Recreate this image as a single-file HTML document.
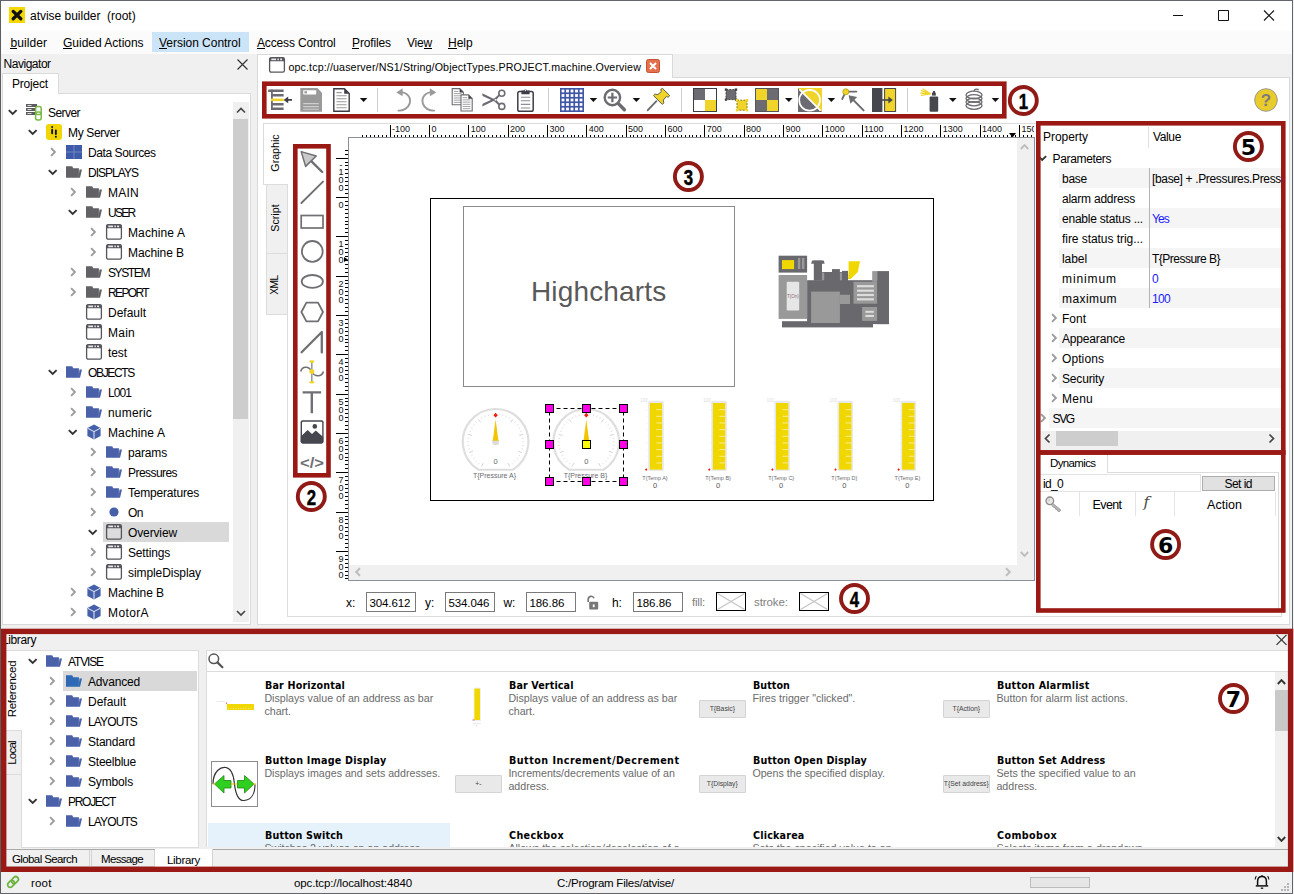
<!DOCTYPE html>
<html><head><meta charset="utf-8"><title>atvise builder</title>
<style>
html,body{margin:0;padding:0}
body{width:1294px;height:894px;position:relative;overflow:hidden;background:#f0f0f0;font-family:"Liberation Sans",sans-serif;font-size:12px;color:#000}
.a{position:absolute;box-sizing:border-box}
.t{white-space:pre}
svg{overflow:visible}

</style></head>
<body>
<div class="a" style="left:0px;top:0px;width:1292px;height:31px;background:#fff"></div>
<svg class="a" style="left:9px;top:7px;" width="16" height="16" viewBox="0 0 16 16"><rect width="16" height="16" fill="#f5d800"/><path d="M4.200 4.400L11.800 11.800M11.800 4.400L4.200 11.800" stroke="#111" stroke-width="3.300" stroke-linecap="round"/></svg>
<div class="a t" style="left:30px;top:5.84px;line-height:20px;font-family:'Liberation Sans',sans-serif;font-size:12px;letter-spacing:-0.020px;">atvise builder  (root)</div>
<svg class="a" style="left:1168px;top:0px;" width="126" height="31" viewBox="0 0 126 31"><path d="M5 15.5h10" stroke="#111" stroke-width="1"/><path d="M50.5 10.5h10v10h-10z" fill="none" stroke="#111" stroke-width="1"/><path d="M96 10.5l10 10M106 10.5l-10 10" stroke="#111" stroke-width="1.1"/></svg>
<div class="a" style="left:1px;top:31px;width:1291px;height:23px;background:#fbfbfb"></div>
<div class="a" style="left:152px;top:32px;width:96.5px;height:20px;background:#cce4f7"></div>
<div class="a t" style="left:10.4px;top:32.84px;line-height:20px;font-family:'Liberation Sans',sans-serif;font-size:12px;letter-spacing:0.081px;">builder</div>
<div class="a" style="left:10.4px;top:48px;width:7px;height:1px;background:#000"></div>
<div class="a t" style="left:63px;top:32.84px;line-height:20px;font-family:'Liberation Sans',sans-serif;font-size:12px;letter-spacing:-0.008px;">Guided Actions</div>
<div class="a" style="left:63px;top:48px;width:8.5px;height:1px;background:#000"></div>
<div class="a t" style="left:159px;top:32.84px;line-height:20px;font-family:'Liberation Sans',sans-serif;font-size:12px;letter-spacing:-0.030px;">Version Control</div>
<div class="a" style="left:159px;top:48px;width:7.5px;height:1px;background:#000"></div>
<div class="a t" style="left:257px;top:32.84px;line-height:20px;font-family:'Liberation Sans',sans-serif;font-size:12px;letter-spacing:-0.150px;">Access Control</div>
<div class="a" style="left:257px;top:48px;width:8px;height:1px;background:#000"></div>
<div class="a t" style="left:352px;top:32.84px;line-height:20px;font-family:'Liberation Sans',sans-serif;font-size:12px;letter-spacing:-0.127px;">Profiles</div>
<div class="a" style="left:352px;top:48px;width:7px;height:1px;background:#000"></div>
<div class="a t" style="left:407px;top:32.84px;line-height:20px;font-family:'Liberation Sans',sans-serif;font-size:12px;letter-spacing:-0.199px;">View</div>
<div class="a" style="left:423.5px;top:48px;width:8.5px;height:1px;background:#000"></div>
<div class="a t" style="left:448px;top:32.84px;line-height:20px;font-family:'Liberation Sans',sans-serif;font-size:12px;letter-spacing:-0.022px;">Help</div>
<div class="a" style="left:448px;top:48px;width:8.5px;height:1px;background:#000"></div>
<div class="a t" style="left:3.6px;top:54.44px;line-height:20px;font-family:'Liberation Sans',sans-serif;font-size:12px;letter-spacing:-0.484px;">Navigator</div>
<svg class="a" style="left:237px;top:59px;" width="11" height="11" viewBox="0 0 11 11"><path d="M0.5 0.5l10 10M10.5 0.5l-10 10" stroke="#333" stroke-width="1.2"/></svg>
<div class="a" style="left:2px;top:93px;width:248.5px;height:532px;background:#fff;border:1px solid #dadada"></div>
<div class="a" style="left:2px;top:73px;width:56.5px;height:21px;background:#fff;border:1px solid #dadada;border-bottom:none"></div>
<div class="a t" style="left:12px;top:74.24px;line-height:20px;font-family:'Liberation Sans',sans-serif;font-size:12px;letter-spacing:-0.194px;">Project</div>
<div class="a" style="left:233px;top:102px;width:16px;height:520px;background:#f0f0f0"></div>
<div class="a" style="left:233px;top:119px;width:15px;height:300px;background:#cdcdcd"></div>
<svg class="a" style="left:236px;top:107px;" width="10" height="7" viewBox="0 0 10 7"><path d="M1 5.5l4-4 4 4" fill="none" stroke="#444" stroke-width="1.6"/></svg>
<svg class="a" style="left:236px;top:610px;" width="10" height="7" viewBox="0 0 10 7"><path d="M1 1l4 4 4-4" fill="none" stroke="#444" stroke-width="1.6"/></svg>
<svg class="a" style="left:8px;top:109px;" width="10" height="7" viewBox="0 0 10 7"><path d="M0.800 1.100l3.900 3.900L8.600 1.100" fill="none" stroke="#333" stroke-width="1.900"/></svg>
<svg class="a" style="left:26px;top:103px;" width="17" height="18" viewBox="0 0 17 18"><g fill="#5c5c60"><rect x="0" y="1" width="11" height="3"/><rect x="0" y="5" width="11" height="3"/><rect x="0" y="9" width="9" height="3"/></g><g fill="#ddd"><rect x="1.5" y="2" width="4" height="1"/><rect x="1.5" y="6" width="4" height="1"/><rect x="1.5" y="10" width="4" height="1"/></g><rect x="9.6" y="3.6" width="5.6" height="8" rx="2" fill="#fff" stroke="#78b843" stroke-width="1.5"/><rect x="9.6" y="9" width="5.6" height="8" rx="2" fill="none" stroke="#78b843" stroke-width="1.5"/></svg>
<div class="a t" style="left:48px;top:103.04px;line-height:20px;font-family:'Liberation Sans',sans-serif;font-size:12px;letter-spacing:-0.557px;">Server</div>
<svg class="a" style="left:28px;top:129px;" width="10" height="7" viewBox="0 0 10 7"><path d="M0.800 1.100l3.900 3.900L8.600 1.100" fill="none" stroke="#333" stroke-width="1.900"/></svg>
<svg class="a" style="left:46px;top:124px;" width="16" height="16" viewBox="0 0 16 16"><rect width="16" height="16" rx="3" fill="#f2d600"/><g fill="#111"><rect x="5.2" y="4.8" width="1.9" height="5.4" rx="0.9"/><circle cx="6.15" cy="3" r="1"/><rect x="8.9" y="5.6" width="1.9" height="5.4" rx="0.9"/><circle cx="9.85" cy="12.8" r="1"/></g></svg>
<div class="a t" style="left:68px;top:123.04px;line-height:20px;font-family:'Liberation Sans',sans-serif;font-size:12px;letter-spacing:-0.343px;">My Server</div>
<svg class="a" style="left:50px;top:147px;" width="7" height="10" viewBox="0 0 7 10"><path d="M1.100 1.200l3.800 3.800L1.100 8.800" fill="none" stroke="#9c9c9c" stroke-width="1.900"/></svg>
<svg class="a" style="left:66px;top:145px;" width="16" height="14" viewBox="0 0 16 14"><rect width="16" height="14" fill="#3f5ba9"/><path d="M8 0v14M0 7h16" stroke="#6e84c4" stroke-width="1"/></svg>
<div class="a t" style="left:88px;top:143.04px;line-height:20px;font-family:'Liberation Sans',sans-serif;font-size:12px;letter-spacing:-0.425px;">Data Sources</div>
<svg class="a" style="left:48px;top:169px;" width="10" height="7" viewBox="0 0 10 7"><path d="M0.800 1.100l3.900 3.900L8.600 1.100" fill="none" stroke="#333" stroke-width="1.900"/></svg>
<svg class="a" style="left:66px;top:166px;" width="16" height="12" viewBox="0 0 16 12"><path d="M0 0.300h6.200l1 1.900h5.700v9.600H0z" fill="#616166"/><path d="M13.500 3.600h2.500l-2 8.200h-1.400l0.300-3z" fill="#616166"/></svg>
<div class="a t" style="left:88px;top:163.04px;line-height:20px;font-family:'Liberation Sans',sans-serif;font-size:12px;letter-spacing:-0.977px;">DISPLAYS</div>
<svg class="a" style="left:70px;top:187px;" width="7" height="10" viewBox="0 0 7 10"><path d="M1.100 1.200l3.800 3.800L1.100 8.800" fill="none" stroke="#9c9c9c" stroke-width="1.900"/></svg>
<svg class="a" style="left:86px;top:186px;" width="16" height="12" viewBox="0 0 16 12"><path d="M0 0.300h6.200l1 1.900h5.700v9.600H0z" fill="#616166"/><path d="M13.500 3.600h2.500l-2 8.200h-1.400l0.300-3z" fill="#616166"/></svg>
<div class="a t" style="left:108px;top:183.04px;line-height:20px;font-family:'Liberation Sans',sans-serif;font-size:12px;letter-spacing:0.250px;">MAIN</div>
<svg class="a" style="left:68px;top:209px;" width="10" height="7" viewBox="0 0 10 7"><path d="M0.800 1.100l3.900 3.900L8.600 1.100" fill="none" stroke="#333" stroke-width="1.900"/></svg>
<svg class="a" style="left:86px;top:206px;" width="16" height="12" viewBox="0 0 16 12"><path d="M0 0.300h6.200l1 1.900h5.700v9.600H0z" fill="#616166"/><path d="M13.500 3.600h2.500l-2 8.200h-1.400l0.300-3z" fill="#616166"/></svg>
<div class="a t" style="left:108px;top:203.04px;line-height:20px;font-family:'Liberation Sans',sans-serif;font-size:12px;letter-spacing:-1.711px;">USER</div>
<svg class="a" style="left:90px;top:227px;" width="7" height="10" viewBox="0 0 7 10"><path d="M1.100 1.200l3.800 3.800L1.100 8.800" fill="none" stroke="#9c9c9c" stroke-width="1.900"/></svg>
<svg class="a" style="left:106px;top:224px;" width="16" height="16" viewBox="0 0 16 16"><rect x="0.600" y="0.600" width="14.800" height="14.600" rx="1.600" fill="#fff" stroke="#55555c" stroke-width="1.300"/><path d="M0.600 4.200V2.200a1.600 1.600 0 0 1 1.600-1.600h11.600a1.600 1.600 0 0 1 1.600 1.600v2z" fill="#55555c"/><g fill="#e6e6e6"><rect x="2.300" y="1.500" width="4.800" height="1.700"/><rect x="8.400" y="1.500" width="1.500" height="1.700"/><rect x="11.100" y="1.500" width="2" height="1.700"/></g></svg>
<div class="a t" style="left:128px;top:223.04px;line-height:20px;font-family:'Liberation Sans',sans-serif;font-size:12px;letter-spacing:0.106px;">Machine A</div>
<svg class="a" style="left:90px;top:247px;" width="7" height="10" viewBox="0 0 7 10"><path d="M1.100 1.200l3.800 3.800L1.100 8.800" fill="none" stroke="#9c9c9c" stroke-width="1.900"/></svg>
<svg class="a" style="left:106px;top:244px;" width="16" height="16" viewBox="0 0 16 16"><rect x="0.600" y="0.600" width="14.800" height="14.600" rx="1.600" fill="#fff" stroke="#55555c" stroke-width="1.300"/><path d="M0.600 4.200V2.200a1.600 1.600 0 0 1 1.600-1.600h11.600a1.600 1.600 0 0 1 1.600 1.600v2z" fill="#55555c"/><g fill="#e6e6e6"><rect x="2.300" y="1.500" width="4.800" height="1.700"/><rect x="8.400" y="1.500" width="1.500" height="1.700"/><rect x="11.100" y="1.500" width="2" height="1.700"/></g></svg>
<div class="a t" style="left:128px;top:243.04px;line-height:20px;font-family:'Liberation Sans',sans-serif;font-size:12px;letter-spacing:-0.078px;">Machine B</div>
<svg class="a" style="left:70px;top:267px;" width="7" height="10" viewBox="0 0 7 10"><path d="M1.100 1.200l3.800 3.800L1.100 8.800" fill="none" stroke="#9c9c9c" stroke-width="1.900"/></svg>
<svg class="a" style="left:86px;top:266px;" width="16" height="12" viewBox="0 0 16 12"><path d="M0 0.300h6.200l1 1.900h5.700v9.600H0z" fill="#616166"/><path d="M13.500 3.600h2.500l-2 8.200h-1.400l0.300-3z" fill="#616166"/></svg>
<div class="a t" style="left:108px;top:263.04px;line-height:20px;font-family:'Liberation Sans',sans-serif;font-size:12px;letter-spacing:-1.391px;">SYSTEM</div>
<svg class="a" style="left:70px;top:287px;" width="7" height="10" viewBox="0 0 7 10"><path d="M1.100 1.200l3.800 3.800L1.100 8.800" fill="none" stroke="#9c9c9c" stroke-width="1.900"/></svg>
<svg class="a" style="left:86px;top:286px;" width="16" height="12" viewBox="0 0 16 12"><path d="M0 0.300h6.200l1 1.900h5.700v9.600H0z" fill="#616166"/><path d="M13.500 3.600h2.500l-2 8.200h-1.400l0.300-3z" fill="#616166"/></svg>
<div class="a t" style="left:108px;top:283.04px;line-height:20px;font-family:'Liberation Sans',sans-serif;font-size:12px;letter-spacing:-1.633px;">REPORT</div>
<svg class="a" style="left:86px;top:304px;" width="16" height="16" viewBox="0 0 16 16"><rect x="0.600" y="0.600" width="14.800" height="14.600" rx="1.600" fill="#fff" stroke="#55555c" stroke-width="1.300"/><path d="M0.600 4.200V2.200a1.600 1.600 0 0 1 1.600-1.600h11.600a1.600 1.600 0 0 1 1.600 1.600v2z" fill="#55555c"/><g fill="#e6e6e6"><rect x="2.300" y="1.500" width="4.800" height="1.700"/><rect x="8.400" y="1.500" width="1.500" height="1.700"/><rect x="11.100" y="1.500" width="2" height="1.700"/></g></svg>
<div class="a t" style="left:108px;top:303.04px;line-height:20px;font-family:'Liberation Sans',sans-serif;font-size:12px;letter-spacing:-0.004px;">Default</div>
<svg class="a" style="left:86px;top:324px;" width="16" height="16" viewBox="0 0 16 16"><rect x="0.600" y="0.600" width="14.800" height="14.600" rx="1.600" fill="#fff" stroke="#55555c" stroke-width="1.300"/><path d="M0.600 4.200V2.200a1.600 1.600 0 0 1 1.600-1.600h11.600a1.600 1.600 0 0 1 1.600 1.600v2z" fill="#55555c"/><g fill="#e6e6e6"><rect x="2.300" y="1.500" width="4.800" height="1.700"/><rect x="8.400" y="1.500" width="1.500" height="1.700"/><rect x="11.100" y="1.500" width="2" height="1.700"/></g></svg>
<div class="a t" style="left:108px;top:323.04px;line-height:20px;font-family:'Liberation Sans',sans-serif;font-size:12px;letter-spacing:0.246px;">Main</div>
<svg class="a" style="left:86px;top:344px;" width="16" height="16" viewBox="0 0 16 16"><rect x="0.600" y="0.600" width="14.800" height="14.600" rx="1.600" fill="#fff" stroke="#55555c" stroke-width="1.300"/><path d="M0.600 4.200V2.200a1.600 1.600 0 0 1 1.600-1.600h11.600a1.600 1.600 0 0 1 1.600 1.600v2z" fill="#55555c"/><g fill="#e6e6e6"><rect x="2.300" y="1.500" width="4.800" height="1.700"/><rect x="8.400" y="1.500" width="1.500" height="1.700"/><rect x="11.100" y="1.500" width="2" height="1.700"/></g></svg>
<div class="a t" style="left:108px;top:343.04px;line-height:20px;font-family:'Liberation Sans',sans-serif;font-size:12px;letter-spacing:-0.086px;">test</div>
<svg class="a" style="left:48px;top:369px;" width="10" height="7" viewBox="0 0 10 7"><path d="M0.800 1.100l3.900 3.900L8.600 1.100" fill="none" stroke="#333" stroke-width="1.900"/></svg>
<svg class="a" style="left:66px;top:366px;" width="16" height="12" viewBox="0 0 16 12"><path d="M0 0.300h6.200l1 1.900h5.700v9.600H0z" fill="#4a60a8"/><path d="M13.500 3.600h2.500l-2 8.200h-1.400l0.300-3z" fill="#4a60a8"/></svg>
<div class="a t" style="left:88px;top:363.04px;line-height:20px;font-family:'Liberation Sans',sans-serif;font-size:12px;letter-spacing:-1.335px;">OBJECTS</div>
<svg class="a" style="left:70px;top:387px;" width="7" height="10" viewBox="0 0 7 10"><path d="M1.100 1.200l3.800 3.800L1.100 8.800" fill="none" stroke="#9c9c9c" stroke-width="1.900"/></svg>
<svg class="a" style="left:86px;top:386px;" width="16" height="12" viewBox="0 0 16 12"><path d="M0 0.300h6.200l1 1.900h5.700v9.600H0z" fill="#4a60a8"/><path d="M13.500 3.600h2.500l-2 8.200h-1.400l0.300-3z" fill="#4a60a8"/></svg>
<div class="a t" style="left:108px;top:383.04px;line-height:20px;font-family:'Liberation Sans',sans-serif;font-size:12px;letter-spacing:-0.926px;">L001</div>
<svg class="a" style="left:70px;top:407px;" width="7" height="10" viewBox="0 0 7 10"><path d="M1.100 1.200l3.800 3.800L1.100 8.800" fill="none" stroke="#9c9c9c" stroke-width="1.900"/></svg>
<svg class="a" style="left:86px;top:406px;" width="16" height="12" viewBox="0 0 16 12"><path d="M0 0.300h6.200l1 1.900h5.700v9.600H0z" fill="#4a60a8"/><path d="M13.500 3.600h2.500l-2 8.200h-1.400l0.300-3z" fill="#4a60a8"/></svg>
<div class="a t" style="left:108px;top:403.04px;line-height:20px;font-family:'Liberation Sans',sans-serif;font-size:12px;letter-spacing:0.188px;">numeric</div>
<svg class="a" style="left:68px;top:429px;" width="10" height="7" viewBox="0 0 10 7"><path d="M0.800 1.100l3.900 3.900L8.600 1.100" fill="none" stroke="#333" stroke-width="1.900"/></svg>
<svg class="a" style="left:86px;top:424px;" width="16" height="16" viewBox="0 0 16 16"><path d="M8 0.6l6.6 3.5v7.8L8 15.4 1.4 11.9V4.1z" fill="#4560a8"/><path d="M1.8 4.3L8 7.6l6.2-3.3M8 7.6v7.4" fill="none" stroke="#e8ecf6" stroke-width="1"/></svg>
<div class="a t" style="left:108px;top:423.04px;line-height:20px;font-family:'Liberation Sans',sans-serif;font-size:12px;letter-spacing:0.106px;">Machine A</div>
<svg class="a" style="left:90px;top:447px;" width="7" height="10" viewBox="0 0 7 10"><path d="M1.100 1.200l3.800 3.800L1.100 8.800" fill="none" stroke="#9c9c9c" stroke-width="1.900"/></svg>
<svg class="a" style="left:106px;top:446px;" width="16" height="12" viewBox="0 0 16 12"><path d="M0 0.300h6.200l1 1.900h5.700v9.600H0z" fill="#4a60a8"/><path d="M13.500 3.600h2.500l-2 8.200h-1.400l0.300-3z" fill="#4a60a8"/></svg>
<div class="a t" style="left:128px;top:443.04px;line-height:20px;font-family:'Liberation Sans',sans-serif;font-size:12px;letter-spacing:-0.169px;">params</div>
<svg class="a" style="left:90px;top:467px;" width="7" height="10" viewBox="0 0 7 10"><path d="M1.100 1.200l3.800 3.800L1.100 8.800" fill="none" stroke="#9c9c9c" stroke-width="1.900"/></svg>
<svg class="a" style="left:106px;top:466px;" width="16" height="12" viewBox="0 0 16 12"><path d="M0 0.300h6.200l1 1.900h5.700v9.600H0z" fill="#4a60a8"/><path d="M13.500 3.600h2.500l-2 8.200h-1.400l0.300-3z" fill="#4a60a8"/></svg>
<div class="a t" style="left:128px;top:463.04px;line-height:20px;font-family:'Liberation Sans',sans-serif;font-size:12px;letter-spacing:-0.559px;">Pressures</div>
<svg class="a" style="left:90px;top:487px;" width="7" height="10" viewBox="0 0 7 10"><path d="M1.100 1.200l3.800 3.800L1.100 8.800" fill="none" stroke="#9c9c9c" stroke-width="1.900"/></svg>
<svg class="a" style="left:106px;top:486px;" width="16" height="12" viewBox="0 0 16 12"><path d="M0 0.300h6.200l1 1.900h5.700v9.600H0z" fill="#4a60a8"/><path d="M13.500 3.600h2.500l-2 8.200h-1.400l0.300-3z" fill="#4a60a8"/></svg>
<div class="a t" style="left:128px;top:483.04px;line-height:20px;font-family:'Liberation Sans',sans-serif;font-size:12px;letter-spacing:-0.198px;">Temperatures</div>
<svg class="a" style="left:90px;top:507px;" width="7" height="10" viewBox="0 0 7 10"><path d="M1.100 1.200l3.800 3.800L1.100 8.800" fill="none" stroke="#9c9c9c" stroke-width="1.900"/></svg>
<svg class="a" style="left:106px;top:504px;" width="16" height="16" viewBox="0 0 16 16"><circle cx="8" cy="8" r="4.6" fill="#4560a8"/></svg>
<div class="a t" style="left:128px;top:503.04px;line-height:20px;font-family:'Liberation Sans',sans-serif;font-size:12px;letter-spacing:-0.508px;">On</div>
<div class="a" style="left:103px;top:522px;width:126px;height:20px;background:#d9d9d9"></div>
<svg class="a" style="left:88px;top:529px;" width="10" height="7" viewBox="0 0 10 7"><path d="M0.800 1.100l3.900 3.900L8.600 1.100" fill="none" stroke="#333" stroke-width="1.900"/></svg>
<svg class="a" style="left:106px;top:524px;" width="16" height="16" viewBox="0 0 16 16"><rect x="0.600" y="0.600" width="14.800" height="14.600" rx="1.600" fill="#dcdcdc" stroke="#55555c" stroke-width="1.300"/><path d="M0.600 4.200V2.200a1.600 1.600 0 0 1 1.600-1.600h11.600a1.600 1.600 0 0 1 1.600 1.600v2z" fill="#55555c"/><g fill="#e6e6e6"><rect x="2.300" y="1.500" width="4.800" height="1.700"/><rect x="8.400" y="1.500" width="1.500" height="1.700"/><rect x="11.100" y="1.500" width="2" height="1.700"/></g></svg>
<div class="a t" style="left:128px;top:523.04px;line-height:20px;font-family:'Liberation Sans',sans-serif;font-size:12px;letter-spacing:-0.127px;">Overview</div>
<svg class="a" style="left:90px;top:547px;" width="7" height="10" viewBox="0 0 7 10"><path d="M1.100 1.200l3.800 3.800L1.100 8.800" fill="none" stroke="#9c9c9c" stroke-width="1.900"/></svg>
<svg class="a" style="left:106px;top:544px;" width="16" height="16" viewBox="0 0 16 16"><rect x="0.600" y="0.600" width="14.800" height="14.600" rx="1.600" fill="#fff" stroke="#55555c" stroke-width="1.300"/><path d="M0.600 4.200V2.200a1.600 1.600 0 0 1 1.600-1.600h11.600a1.600 1.600 0 0 1 1.600 1.600v2z" fill="#55555c"/><g fill="#e6e6e6"><rect x="2.300" y="1.500" width="4.800" height="1.700"/><rect x="8.400" y="1.500" width="1.500" height="1.700"/><rect x="11.100" y="1.500" width="2" height="1.700"/></g></svg>
<div class="a t" style="left:128px;top:543.04px;line-height:20px;font-family:'Liberation Sans',sans-serif;font-size:12px;letter-spacing:-0.170px;">Settings</div>
<svg class="a" style="left:90px;top:567px;" width="7" height="10" viewBox="0 0 7 10"><path d="M1.100 1.200l3.800 3.800L1.100 8.800" fill="none" stroke="#9c9c9c" stroke-width="1.900"/></svg>
<svg class="a" style="left:106px;top:564px;" width="16" height="16" viewBox="0 0 16 16"><rect x="0.600" y="0.600" width="14.800" height="14.600" rx="1.600" fill="#fff" stroke="#55555c" stroke-width="1.300"/><path d="M0.600 4.200V2.200a1.600 1.600 0 0 1 1.600-1.600h11.600a1.600 1.600 0 0 1 1.600 1.600v2z" fill="#55555c"/><g fill="#e6e6e6"><rect x="2.300" y="1.500" width="4.800" height="1.700"/><rect x="8.400" y="1.500" width="1.500" height="1.700"/><rect x="11.100" y="1.500" width="2" height="1.700"/></g></svg>
<div class="a t" style="left:128px;top:563.04px;line-height:20px;font-family:'Liberation Sans',sans-serif;font-size:12px;letter-spacing:-0.079px;">simpleDisplay</div>
<svg class="a" style="left:70px;top:587px;" width="7" height="10" viewBox="0 0 7 10"><path d="M1.100 1.200l3.800 3.800L1.100 8.800" fill="none" stroke="#9c9c9c" stroke-width="1.900"/></svg>
<svg class="a" style="left:86px;top:584px;" width="16" height="16" viewBox="0 0 16 16"><path d="M8 0.6l6.6 3.5v7.8L8 15.4 1.4 11.9V4.1z" fill="#4560a8"/><path d="M1.8 4.3L8 7.6l6.2-3.3M8 7.6v7.4" fill="none" stroke="#e8ecf6" stroke-width="1"/></svg>
<div class="a t" style="left:108px;top:583.04px;line-height:20px;font-family:'Liberation Sans',sans-serif;font-size:12px;letter-spacing:-0.078px;">Machine B</div>
<svg class="a" style="left:70px;top:607px;" width="7" height="10" viewBox="0 0 7 10"><path d="M1.100 1.200l3.800 3.800L1.100 8.800" fill="none" stroke="#9c9c9c" stroke-width="1.900"/></svg>
<svg class="a" style="left:86px;top:604px;" width="16" height="16" viewBox="0 0 16 16"><path d="M8 0.6l6.6 3.5v7.8L8 15.4 1.4 11.9V4.1z" fill="#4560a8"/><path d="M1.8 4.3L8 7.6l6.2-3.3M8 7.6v7.4" fill="none" stroke="#e8ecf6" stroke-width="1"/></svg>
<div class="a t" style="left:108px;top:603.04px;line-height:20px;font-family:'Liberation Sans',sans-serif;font-size:12px;letter-spacing:0.385px;">MotorA</div>
<div class="a" style="left:257px;top:54px;width:1032.5px;height:24px;background:#f0f0f0;border-bottom:1px solid #d9d9d9"></div>
<div class="a" style="left:257px;top:77.5px;width:1032.5px;height:547px;background:#fff;border:1px solid #d9d9d9;border-top:none"></div>
<div class="a" style="left:257px;top:54px;width:416px;height:24px;background:#fff;border:1px solid #d9d9d9;border-bottom:none"></div>
<svg class="a" style="left:269px;top:57px;" width="16" height="16" viewBox="0 0 16 16"><rect x="0.600" y="0.600" width="14.800" height="14.600" rx="1.600" fill="#fff" stroke="#55555c" stroke-width="1.300"/><path d="M0.600 4.200V2.200a1.600 1.600 0 0 1 1.600-1.600h11.600a1.600 1.600 0 0 1 1.600 1.600v2z" fill="#55555c"/><g fill="#e6e6e6"><rect x="2.300" y="1.500" width="4.800" height="1.700"/><rect x="8.400" y="1.500" width="1.500" height="1.700"/><rect x="11.100" y="1.500" width="2" height="1.700"/></g></svg>
<div class="a t" style="left:288.4px;top:57.10px;line-height:20px;font-family:'Liberation Sans',sans-serif;font-size:10.67px;letter-spacing:0.138px;">opc.tcp://uaserver/NS1/String/ObjectTypes.PROJECT.machine.Overview</div>
<svg class="a" style="left:646px;top:59px;" width="14" height="14" viewBox="0 0 14 14"><rect x="0.5" y="0.5" width="13" height="13" rx="2" fill="#e2714f" stroke="#c9502e"/><path d="M4 4l6 6M10 4l-6 6" stroke="#fff" stroke-width="2"/></svg>
<div class="a" style="left:286.5px;top:123px;width:995px;height:493.5px;background:#fff;border:1px solid #dcdcdc"></div>
<div class="a" style="left:266px;top:184px;width:21px;height:69.5px;background:#f0f0f0;border:1px solid #dcdcdc;border-right:none"></div>
<div class="a" style="left:266px;top:253px;width:21px;height:62px;background:#f0f0f0;border:1px solid #dcdcdc;border-right:none"></div>
<div class="a" style="left:263px;top:123px;width:24.5px;height:61.5px;background:#fff;border:1px solid #dcdcdc;border-right:none"></div>
<div class="a t" style="left:275.3px;top:153px;width:0;height:0;"><div class="a t" style="left:-20.0px;top:-10px;width:40px;line-height:20px;text-align:center;font-family:'Liberation Sans',sans-serif;font-size:10.67px;transform:rotate(-90deg);transform-origin:50% 50%;">Graphic</div></div>
<div class="a t" style="left:275.3px;top:218px;width:0;height:0;"><div class="a t" style="left:-15.0px;top:-10px;width:30px;line-height:20px;text-align:center;font-family:'Liberation Sans',sans-serif;font-size:10.67px;transform:rotate(-90deg);transform-origin:50% 50%;">Script</div></div>
<div class="a t" style="left:275.3px;top:285px;width:0;height:0;"><div class="a t" style="left:-12.0px;top:-10px;width:24px;line-height:20px;text-align:center;font-family:'Liberation Sans',sans-serif;font-size:10.2px;letter-spacing:-0.451px;transform:rotate(-90deg);transform-origin:50% 50%;">XML</div></div>
<svg class="a" style="left:0;top:0;overflow:hidden" width="1033.500" height="140" viewBox="0 0 1033.500 140"><g stroke="#000" stroke-width="1" shape-rendering="crispEdges"><path d="M362.53 134.5V137.5"/><path d="M366.47 134.5V137.5"/><path d="M370.40 134.5V137.5"/><path d="M374.33 134.5V137.5"/><path d="M378.27 134.5V137.5"/><path d="M382.20 134.5V137.5"/><path d="M386.13 134.5V137.5"/><path d="M390.07 125V137.5"/><path d="M394.00 134.5V137.5"/><path d="M397.93 134.5V137.5"/><path d="M401.87 134.5V137.5"/><path d="M405.80 134.5V137.5"/><path d="M409.73 134.5V137.5"/><path d="M413.67 134.5V137.5"/><path d="M417.60 134.5V137.5"/><path d="M421.53 134.5V137.5"/><path d="M425.47 134.5V137.5"/><path d="M429.40 125V137.5"/><path d="M433.33 134.5V137.5"/><path d="M437.27 134.5V137.5"/><path d="M441.20 134.5V137.5"/><path d="M445.13 134.5V137.5"/><path d="M449.07 134.5V137.5"/><path d="M453.00 134.5V137.5"/><path d="M456.93 134.5V137.5"/><path d="M460.87 134.5V137.5"/><path d="M464.80 134.5V137.5"/><path d="M468.73 125V137.5"/><path d="M472.67 134.5V137.5"/><path d="M476.60 134.5V137.5"/><path d="M480.53 134.5V137.5"/><path d="M484.47 134.5V137.5"/><path d="M488.40 134.5V137.5"/><path d="M492.33 134.5V137.5"/><path d="M496.27 134.5V137.5"/><path d="M500.20 134.5V137.5"/><path d="M504.13 134.5V137.5"/><path d="M508.07 125V137.5"/><path d="M512.00 134.5V137.5"/><path d="M515.93 134.5V137.5"/><path d="M519.87 134.5V137.5"/><path d="M523.80 134.5V137.5"/><path d="M527.73 134.5V137.5"/><path d="M531.67 134.5V137.5"/><path d="M535.60 134.5V137.5"/><path d="M539.53 134.5V137.5"/><path d="M543.47 134.5V137.5"/><path d="M547.40 125V137.5"/><path d="M551.33 134.5V137.5"/><path d="M555.27 134.5V137.5"/><path d="M559.20 134.5V137.5"/><path d="M563.13 134.5V137.5"/><path d="M567.07 134.5V137.5"/><path d="M571.00 134.5V137.5"/><path d="M574.93 134.5V137.5"/><path d="M578.87 134.5V137.5"/><path d="M582.80 134.5V137.5"/><path d="M586.73 125V137.5"/><path d="M590.67 134.5V137.5"/><path d="M594.60 134.5V137.5"/><path d="M598.53 134.5V137.5"/><path d="M602.47 134.5V137.5"/><path d="M606.40 134.5V137.5"/><path d="M610.33 134.5V137.5"/><path d="M614.27 134.5V137.5"/><path d="M618.20 134.5V137.5"/><path d="M622.13 134.5V137.5"/><path d="M626.07 125V137.5"/><path d="M630.00 134.5V137.5"/><path d="M633.93 134.5V137.5"/><path d="M637.86 134.5V137.5"/><path d="M641.80 134.5V137.5"/><path d="M645.73 134.5V137.5"/><path d="M649.66 134.5V137.5"/><path d="M653.60 134.5V137.5"/><path d="M657.53 134.5V137.5"/><path d="M661.46 134.5V137.5"/><path d="M665.40 125V137.5"/><path d="M669.33 134.5V137.5"/><path d="M673.26 134.5V137.5"/><path d="M677.20 134.5V137.5"/><path d="M681.13 134.5V137.5"/><path d="M685.06 134.5V137.5"/><path d="M689.00 134.5V137.5"/><path d="M692.93 134.5V137.5"/><path d="M696.86 134.5V137.5"/><path d="M700.80 134.5V137.5"/><path d="M704.73 125V137.5"/><path d="M708.66 134.5V137.5"/><path d="M712.60 134.5V137.5"/><path d="M716.53 134.5V137.5"/><path d="M720.46 134.5V137.5"/><path d="M724.40 134.5V137.5"/><path d="M728.33 134.5V137.5"/><path d="M732.26 134.5V137.5"/><path d="M736.20 134.5V137.5"/><path d="M740.13 134.5V137.5"/><path d="M744.06 125V137.5"/><path d="M748.00 134.5V137.5"/><path d="M751.93 134.5V137.5"/><path d="M755.86 134.5V137.5"/><path d="M759.80 134.5V137.5"/><path d="M763.73 134.5V137.5"/><path d="M767.66 134.5V137.5"/><path d="M771.60 134.5V137.5"/><path d="M775.53 134.5V137.5"/><path d="M779.46 134.5V137.5"/><path d="M783.40 125V137.5"/><path d="M787.33 134.5V137.5"/><path d="M791.26 134.5V137.5"/><path d="M795.20 134.5V137.5"/><path d="M799.13 134.5V137.5"/><path d="M803.06 134.5V137.5"/><path d="M807.00 134.5V137.5"/><path d="M810.93 134.5V137.5"/><path d="M814.86 134.5V137.5"/><path d="M818.80 134.5V137.5"/><path d="M822.73 125V137.5"/><path d="M826.66 134.5V137.5"/><path d="M830.60 134.5V137.5"/><path d="M834.53 134.5V137.5"/><path d="M838.46 134.5V137.5"/><path d="M842.40 134.5V137.5"/><path d="M846.33 134.5V137.5"/><path d="M850.26 134.5V137.5"/><path d="M854.20 134.5V137.5"/><path d="M858.13 134.5V137.5"/><path d="M862.06 125V137.5"/><path d="M866.00 134.5V137.5"/><path d="M869.93 134.5V137.5"/><path d="M873.86 134.5V137.5"/><path d="M877.80 134.5V137.5"/><path d="M881.73 134.5V137.5"/><path d="M885.66 134.5V137.5"/><path d="M889.60 134.5V137.5"/><path d="M893.53 134.5V137.5"/><path d="M897.46 134.5V137.5"/><path d="M901.40 125V137.5"/><path d="M905.33 134.5V137.5"/><path d="M909.26 134.5V137.5"/><path d="M913.20 134.5V137.5"/><path d="M917.13 134.5V137.5"/><path d="M921.06 134.5V137.5"/><path d="M925.00 134.5V137.5"/><path d="M928.93 134.5V137.5"/><path d="M932.86 134.5V137.5"/><path d="M936.80 134.5V137.5"/><path d="M940.73 125V137.5"/><path d="M944.66 134.5V137.5"/><path d="M948.60 134.5V137.5"/><path d="M952.53 134.5V137.5"/><path d="M956.46 134.5V137.5"/><path d="M960.40 134.5V137.5"/><path d="M964.33 134.5V137.5"/><path d="M968.26 134.5V137.5"/><path d="M972.20 134.5V137.5"/><path d="M976.13 134.5V137.5"/><path d="M980.06 125V137.5"/><path d="M984.00 134.5V137.5"/><path d="M987.93 134.5V137.5"/><path d="M991.86 134.5V137.5"/><path d="M995.80 134.5V137.5"/><path d="M999.73 134.5V137.5"/><path d="M1003.66 134.5V137.5"/><path d="M1007.60 134.5V137.5"/><path d="M1011.53 134.5V137.5"/><path d="M1015.46 134.5V137.5"/><path d="M1019.39 125V137.5"/><path d="M1023.33 134.5V137.5"/><path d="M1027.26 134.5V137.5"/><path d="M1031.19 134.5V137.5"/></g><g font-family="Liberation Sans, sans-serif" font-size="9" fill="#111"><text x="392.07" y="132.200">-100</text><text x="431.40" y="132.200">0</text><text x="470.73" y="132.200">100</text><text x="510.07" y="132.200">200</text><text x="549.40" y="132.200">300</text><text x="588.73" y="132.200">400</text><text x="628.07" y="132.200">500</text><text x="667.40" y="132.200">600</text><text x="706.73" y="132.200">700</text><text x="746.06" y="132.200">800</text><text x="785.40" y="132.200">900</text><text x="824.73" y="132.200">1000</text><text x="864.06" y="132.200">1100</text><text x="903.40" y="132.200">1200</text><text x="942.73" y="132.200">1300</text><text x="982.06" y="132.200">1400</text><text x="1021.39" y="132.200">150</text></g><path d="M1009 133h7l-3.5 4.5z" fill="#000"/></svg>
<svg class="a" style="left:0;top:0" width="350" height="582" viewBox="0 0 350 582"><g stroke="#000" stroke-width="1" shape-rendering="crispEdges"><path d="M344.5 150.20H348.5"/><path d="M344.5 154.13H348.5"/><path d="M336 158.07H348.5"/><path d="M344.5 162.00H348.5"/><path d="M344.5 165.93H348.5"/><path d="M344.5 169.87H348.5"/><path d="M344.5 173.80H348.5"/><path d="M344.5 177.73H348.5"/><path d="M344.5 181.67H348.5"/><path d="M344.5 185.60H348.5"/><path d="M344.5 189.53H348.5"/><path d="M344.5 193.47H348.5"/><path d="M336 197.40H348.5"/><path d="M344.5 201.33H348.5"/><path d="M344.5 205.27H348.5"/><path d="M344.5 209.20H348.5"/><path d="M344.5 213.13H348.5"/><path d="M344.5 217.07H348.5"/><path d="M344.5 221.00H348.5"/><path d="M344.5 224.93H348.5"/><path d="M344.5 228.87H348.5"/><path d="M344.5 232.80H348.5"/><path d="M336 236.73H348.5"/><path d="M344.5 240.67H348.5"/><path d="M344.5 244.60H348.5"/><path d="M344.5 248.53H348.5"/><path d="M344.5 252.47H348.5"/><path d="M344.5 256.40H348.5"/><path d="M344.5 260.33H348.5"/><path d="M344.5 264.27H348.5"/><path d="M344.5 268.20H348.5"/><path d="M344.5 272.13H348.5"/><path d="M336 276.07H348.5"/><path d="M344.5 280.00H348.5"/><path d="M344.5 283.93H348.5"/><path d="M344.5 287.87H348.5"/><path d="M344.5 291.80H348.5"/><path d="M344.5 295.73H348.5"/><path d="M344.5 299.67H348.5"/><path d="M344.5 303.60H348.5"/><path d="M344.5 307.53H348.5"/><path d="M344.5 311.47H348.5"/><path d="M336 315.40H348.5"/><path d="M344.5 319.33H348.5"/><path d="M344.5 323.27H348.5"/><path d="M344.5 327.20H348.5"/><path d="M344.5 331.13H348.5"/><path d="M344.5 335.07H348.5"/><path d="M344.5 339.00H348.5"/><path d="M344.5 342.93H348.5"/><path d="M344.5 346.87H348.5"/><path d="M344.5 350.80H348.5"/><path d="M336 354.73H348.5"/><path d="M344.5 358.67H348.5"/><path d="M344.5 362.60H348.5"/><path d="M344.5 366.53H348.5"/><path d="M344.5 370.47H348.5"/><path d="M344.5 374.40H348.5"/><path d="M344.5 378.33H348.5"/><path d="M344.5 382.27H348.5"/><path d="M344.5 386.20H348.5"/><path d="M344.5 390.13H348.5"/><path d="M336 394.07H348.5"/><path d="M344.5 398.00H348.5"/><path d="M344.5 401.93H348.5"/><path d="M344.5 405.86H348.5"/><path d="M344.5 409.80H348.5"/><path d="M344.5 413.73H348.5"/><path d="M344.5 417.66H348.5"/><path d="M344.5 421.60H348.5"/><path d="M344.5 425.53H348.5"/><path d="M344.5 429.46H348.5"/><path d="M336 433.40H348.5"/><path d="M344.5 437.33H348.5"/><path d="M344.5 441.26H348.5"/><path d="M344.5 445.20H348.5"/><path d="M344.5 449.13H348.5"/><path d="M344.5 453.06H348.5"/><path d="M344.5 457.00H348.5"/><path d="M344.5 460.93H348.5"/><path d="M344.5 464.86H348.5"/><path d="M344.5 468.80H348.5"/><path d="M336 472.73H348.5"/><path d="M344.5 476.66H348.5"/><path d="M344.5 480.60H348.5"/><path d="M344.5 484.53H348.5"/><path d="M344.5 488.46H348.5"/><path d="M344.5 492.40H348.5"/><path d="M344.5 496.33H348.5"/><path d="M344.5 500.26H348.5"/><path d="M344.5 504.20H348.5"/><path d="M344.5 508.13H348.5"/><path d="M336 512.06H348.5"/><path d="M344.5 516.00H348.5"/><path d="M344.5 519.93H348.5"/><path d="M344.5 523.86H348.5"/><path d="M344.5 527.80H348.5"/><path d="M344.5 531.73H348.5"/><path d="M344.5 535.66H348.5"/><path d="M344.5 539.60H348.5"/><path d="M344.5 543.53H348.5"/><path d="M344.5 547.46H348.5"/><path d="M336 551.40H348.5"/><path d="M344.5 555.33H348.5"/><path d="M344.5 559.26H348.5"/><path d="M344.5 563.20H348.5"/><path d="M344.5 567.13H348.5"/><path d="M344.5 571.06H348.5"/><path d="M344.5 575.00H348.5"/><path d="M344.5 578.93H348.5"/></g><g font-family="Liberation Sans, sans-serif" font-size="9" fill="#111" text-anchor="middle"><text x="341" y="167.67">-</text><text x="341" y="175.17">1</text><text x="341" y="183.17">0</text><text x="341" y="191.17">0</text><text x="341" y="208.00">0</text><text x="341" y="247.33">1</text><text x="341" y="255.33">0</text><text x="341" y="263.33">0</text><text x="341" y="286.67">2</text><text x="341" y="294.67">0</text><text x="341" y="302.67">0</text><text x="341" y="326.00">3</text><text x="341" y="334.00">0</text><text x="341" y="342.00">0</text><text x="341" y="365.33">4</text><text x="341" y="373.33">0</text><text x="341" y="381.33">0</text><text x="341" y="404.67">5</text><text x="341" y="412.67">0</text><text x="341" y="420.67">0</text><text x="341" y="444.00">6</text><text x="341" y="452.00">0</text><text x="341" y="460.00">0</text><text x="341" y="483.33">7</text><text x="341" y="491.33">0</text><text x="341" y="499.33">0</text><text x="341" y="522.66">8</text><text x="341" y="530.66">0</text><text x="341" y="538.66">0</text><text x="341" y="562.00">9</text><text x="341" y="570.00">0</text><text x="341" y="578.00">0</text></g><path d="M344 257l4 2.5-4 2.5z" fill="#000"/></svg>
<div class="a" style="left:348px;top:137px;width:686.5px;height:443.5px;background:#fff;border:1px solid #8a8f9a"></div>
<div class="a" style="left:1017px;top:138px;width:16.5px;height:426.5px;background:#f0f0f0"></div>
<div class="a" style="left:349px;top:564.5px;width:684.5px;height:15px;background:#f0f0f0"></div>
<svg class="a" style="left:1020px;top:144px;" width="9" height="6" viewBox="0 0 9 6"><path d="M0.8 5l3.7-3.8L8.2 5" fill="none" stroke="#bdbdbd" stroke-width="1.900"/></svg>
<svg class="a" style="left:1020px;top:551px;" width="9" height="6" viewBox="0 0 9 6"><path d="M0.8 1l3.7 3.8L8.2 1" fill="none" stroke="#bdbdbd" stroke-width="1.900"/></svg>
<svg class="a" style="left:355px;top:567px;" width="6" height="9" viewBox="0 0 6 9"><g transform="translate(0 0.5)"><path d="M5 0.8L1.2 4.5 5 8.2" fill="none" stroke="#bdbdbd" stroke-width="1.900"/></g></svg>
<svg class="a" style="left:1005px;top:567px;" width="6" height="9" viewBox="0 0 6 9"><g transform="translate(0 0.5)"><path d="M1 0.8l3.8 3.7L1 8.2" fill="none" stroke="#bdbdbd" stroke-width="1.900"/></g></svg>
<div class="a" style="left:430px;top:198px;width:504px;height:303px;background:#fff;border:1px solid #000"></div>
<div class="a" style="left:463px;top:206px;width:272px;height:180.5px;background:#fff;border:1px solid #8a8a8a"></div>
<div class="a t" style="left:531px;top:282.30px;line-height:20px;font-family:'Liberation Sans',sans-serif;font-size:28px;color:#595959;letter-spacing:0.146px;">Highcharts</div>
<svg class="a" style="left:268px;top:88px;" width="24" height="24" viewBox="0 0 24 24"><g fill="#6b6b71"><rect x="0.2" y="1.5" width="15.4" height="2.5"/><rect x="3" y="1.5" width="1.8" height="20.5"/><rect x="3" y="6" width="12.6" height="2.5"/><rect x="3" y="15" width="12.6" height="2.5"/><rect x="3" y="19.5" width="12.6" height="2.5"/></g><rect x="3" y="10.6" width="12.6" height="2.5" fill="#f0d42a"/><path d="M15.6 11.9l4.6-3.4v2.5h3.8v1.8h-3.8v2.5z" fill="#3d3d47"/></svg>
<svg class="a" style="left:300px;top:88px;" width="24" height="24" viewBox="0 0 24 24"><path d="M0.3 0h17l4.7 4.7V23.8H0.3z" fill="#9a9a9a"/><rect x="3.2" y="2.2" width="13" height="4.2" rx="0.6" fill="#fff"/><rect x="4.4" y="3.2" width="2.6" height="2.2" fill="#9a9a9a"/><path d="M3.2 15.6h15.6M3.2 18.6h15.6M3.2 21.2h15.6" stroke="#cfcfcf" stroke-width="1.1"/></svg>
<svg class="a" style="left:333px;top:88px;" width="17" height="24" viewBox="0 0 17 24"><path d="M0.8 0.7h10.6l4.8 4.8V23.3H0.8z" fill="#fff" stroke="#3d3d47" stroke-width="1.4"/><path d="M11.2 0.7v5h5z" fill="#3d3d47"/><path d="M3.4 4.6h5.4M3.4 7.8h10.2M3.4 10.8h10.2M3.4 13.8h10.2M3.4 16.8h10.2M3.4 19.8h10.2" stroke="#9b9b9b" stroke-width="1.1"/></svg>
<svg class="a" style="left:359px;top:98px;" width="8" height="4" viewBox="0 0 8 4"><g transform="translate(0.8 0)"><path d="M0 0h7.6L3.8 4z" fill="#111"/></g></svg>
<div class="a" style="left:377px;top:88px;width:1px;height:24px;background:#cfcfcf"></div>
<svg class="a" style="left:396px;top:88px;" width="16" height="24" viewBox="0 0 16 24"><path d="M3 4.2C11 3.6 15.5 9.5 13.6 15.6 12.2 20 7.5 22.8 2.4 22.6" fill="none" stroke="#9a9a9a" stroke-width="1.9" stroke-linecap="round"/><path d="M0.3 4.6L6.6 0.2v8z" fill="#9a9a9a"/></svg>
<svg class="a" style="left:420px;top:88px;" width="16" height="24" viewBox="0 0 16 24"><g transform="translate(0.5 0)"><path d="M13 4.2C5 3.6 0.5 9.5 2.4 15.6 3.8 20 8.5 22.8 13.6 22.6" fill="none" stroke="#9a9a9a" stroke-width="1.9" stroke-linecap="round"/><path d="M15.7 4.6L9.4 0.2v8z" fill="#9a9a9a"/></g></svg>
<svg class="a" style="left:451px;top:88px;" width="22" height="24" viewBox="0 0 22 24"><g transform="translate(0.6 0)"><g transform="translate(0 0)"><path d="M0.6 0.6h7.6l3.6 3.6V16.7H0.6z" fill="#fff" stroke="#6b6b71" stroke-width="1.1"/><path d="M8 0.6v3.8h3.8z" fill="#3d3d47"/><path d="M2.2 3.4h4.6M2.2 5.6h7.8M2.2 7.8h7.8M2.2 10h7.8M2.2 12.2h7.8M2.2 14.4h7.8" stroke="#a3a3a3" stroke-width="1"/></g><g transform="translate(8.8 6.3)"><path d="M0.6 0.6h7.6l3.6 3.6V16.7H0.6z" fill="#fff" stroke="#6b6b71" stroke-width="1.1"/><path d="M8 0.6v3.8h3.8z" fill="#3d3d47"/><path d="M2.2 3.4h4.6M2.2 5.6h7.8M2.2 7.8h7.8M2.2 10h7.8M2.2 12.2h7.8M2.2 14.4h7.8" stroke="#a3a3a3" stroke-width="1"/></g></g></svg>
<svg class="a" style="left:482px;top:88px;" width="24" height="24" viewBox="0 0 24 24"><path d="M0.200 5.200L14.600 12.300 18.200 16.600 16.800 17.400 12.600 13.600 0.600 8z" fill="#6b6b71"/><path d="M0.200 18.400L14.600 11.500 18.200 7.200 16.800 6.400 12.600 10.200 0.600 15.800z" fill="#6b6b71"/><circle cx="19.800" cy="5.300" r="3" fill="#fff" stroke="#6b6b71" stroke-width="1.600"/><circle cx="19.800" cy="18.400" r="3" fill="#fff" stroke="#6b6b71" stroke-width="1.600"/><circle cx="13.400" cy="11.900" r="0.800" fill="#fff"/></svg>
<svg class="a" style="left:517px;top:88px;" width="17" height="24" viewBox="0 0 17 24"><rect x="0.8" y="3.4" width="15.4" height="19.8" rx="1.8" fill="#fff" stroke="#3d3d47" stroke-width="1.5"/><path d="M4.4 2.6h2.6a1.6 1.6 0 0 1 3 0h2.6v3.6H4.4z" fill="#3d3d47"/><circle cx="8.5" cy="2.6" r="0.7" fill="#fff"/><path d="M3.8 9.2h9.4M3.8 12.8h9.4M3.8 16.4h9.4M3.8 20h9.4" stroke="#8d8d92" stroke-width="1.1"/></svg>
<div class="a" style="left:548px;top:88px;width:1px;height:24px;background:#cfcfcf"></div>
<svg class="a" style="left:560px;top:88px;" width="24" height="24" viewBox="0 0 24 24"><rect width="24" height="24" fill="#3f55a6"/><rect x="1.6" y="1.6" width="2.8" height="2.8" fill="#fff"/><rect x="6.1" y="1.6" width="2.8" height="2.8" fill="#fff"/><rect x="10.6" y="1.6" width="2.8" height="2.8" fill="#fff"/><rect x="15.1" y="1.6" width="2.8" height="2.8" fill="#fff"/><rect x="19.6" y="1.6" width="2.8" height="2.8" fill="#fff"/><rect x="1.6" y="6.1" width="2.8" height="2.8" fill="#fff"/><rect x="6.1" y="6.1" width="2.8" height="2.8" fill="#fff"/><rect x="10.6" y="6.1" width="2.8" height="2.8" fill="#fff"/><rect x="15.1" y="6.1" width="2.8" height="2.8" fill="#fff"/><rect x="19.6" y="6.1" width="2.8" height="2.8" fill="#fff"/><rect x="1.6" y="10.6" width="2.8" height="2.8" fill="#fff"/><rect x="6.1" y="10.6" width="2.8" height="2.8" fill="#fff"/><rect x="10.6" y="10.6" width="2.8" height="2.8" fill="#fff"/><rect x="15.1" y="10.6" width="2.8" height="2.8" fill="#fff"/><rect x="19.6" y="10.6" width="2.8" height="2.8" fill="#fff"/><rect x="1.6" y="15.1" width="2.8" height="2.8" fill="#fff"/><rect x="6.1" y="15.1" width="2.8" height="2.8" fill="#fff"/><rect x="10.6" y="15.1" width="2.8" height="2.8" fill="#fff"/><rect x="15.1" y="15.1" width="2.8" height="2.8" fill="#fff"/><rect x="19.6" y="15.1" width="2.8" height="2.8" fill="#fff"/><rect x="1.6" y="19.6" width="2.8" height="2.8" fill="#fff"/><rect x="6.1" y="19.6" width="2.8" height="2.8" fill="#fff"/><rect x="10.6" y="19.6" width="2.8" height="2.8" fill="#fff"/><rect x="15.1" y="19.6" width="2.8" height="2.8" fill="#fff"/><rect x="19.6" y="19.6" width="2.8" height="2.8" fill="#fff"/></svg>
<svg class="a" style="left:589px;top:98px;" width="8" height="4" viewBox="0 0 8 4"><g transform="translate(0.6 0)"><path d="M0 0h7.6L3.8 4z" fill="#111"/></g></svg>
<svg class="a" style="left:603px;top:88px;" width="24" height="24" viewBox="0 0 24 24"><circle cx="9.4" cy="9.500" r="7.700" fill="#fff" stroke="#6b6b71" stroke-width="2.400"/><path d="M9.4 4.800v9.400M4.700 9.500h9.400" stroke="#6b6b71" stroke-width="2.200"/><path d="M15.400 15.600l6 6.200" stroke="#6b6b71" stroke-width="3.400" stroke-linecap="round"/></svg>
<svg class="a" style="left:632px;top:98px;" width="8" height="4" viewBox="0 0 8 4"><g transform="translate(0.6 0)"><path d="M0 0h7.6L3.8 4z" fill="#111"/></g></svg>
<svg class="a" style="left:647px;top:88px;" width="22" height="24" viewBox="0 0 22 24"><path d="M0.800 22.200L9.400 13.200" stroke="#6b6b71" stroke-width="1.900" stroke-linecap="round"/><g transform="translate(0.600 1.400) rotate(45 13 9) scale(0.940)"><path d="M7.800 0.600h10.400c0.800 0 0.800 2.600 0 2.600l-1.400 0.400 0.300 5.200 2.300 1.600c0.800 0.600 0.600 2.400-0.400 2.400H7c-1 0-1.200-1.800-0.400-2.400l2.300-1.600 0.300-5.200-1.400-0.400c-0.800 0-0.800-2.600 0-2.600z" fill="#f0d42a" stroke="#5a5a4e" stroke-width="1"/></g></svg>
<div class="a" style="left:681px;top:88px;width:1px;height:24px;background:#cfcfcf"></div>
<svg class="a" style="left:693px;top:88px;" width="24" height="24" viewBox="0 0 24 24"><rect x="0.5" y="0.5" width="23" height="23" fill="#fff" stroke="#3d3d47" stroke-width="1"/><rect x="1" y="1" width="11" height="11" fill="#6b6b71"/><rect x="12" y="12" width="11" height="11" fill="#f0d42a"/></svg>
<svg class="a" style="left:724px;top:88px;" width="24" height="24" viewBox="0 0 24 24"><g transform="translate(0.4 0)"><rect x="1.6" y="1.6" width="10" height="10" fill="#6b6b71" stroke="#444" stroke-width="1" stroke-dasharray="2 1.2"/><rect x="12.6" y="12.2" width="10" height="10" fill="#f0d42a" stroke="#8a7a10" stroke-width="1" stroke-dasharray="2 1.2"/><g fill="#444"><rect x="0.4" y="0.4" width="2.4" height="2.4"/><rect x="10.4" y="0.4" width="2.4" height="2.4"/><rect x="0.4" y="10.4" width="2.4" height="2.4"/><rect x="10.4" y="10.4" width="2.4" height="2.4"/></g><g fill="#f0d42a"><rect x="11.4" y="11" width="2.4" height="2.4"/><rect x="21.4" y="11" width="2.4" height="2.4"/><rect x="11.4" y="21" width="2.4" height="2.4"/><rect x="21.4" y="21" width="2.4" height="2.4"/></g></g></svg>
<svg class="a" style="left:755px;top:88px;" width="24" height="24" viewBox="0 0 24 24"><rect width="24" height="24" fill="#6b6b71"/><rect x="0" y="0" width="12" height="12" fill="#f0d42a"/><rect x="12" y="12" width="12" height="12" fill="#f0d42a"/><rect x="0.5" y="0.5" width="23" height="23" fill="none" stroke="#55555c" stroke-width="1"/></svg>
<svg class="a" style="left:785px;top:98px;" width="8" height="4" viewBox="0 0 8 4"><path d="M0 0h7.6L3.8 4z" fill="#111"/></svg>
<svg class="a" style="left:798px;top:88px;" width="24" height="24" viewBox="0 0 24 24"><path d="M0 0h24v24z" fill="#f0d42a"/><path d="M0 0L24 24H0z" fill="#6b6b71"/><circle cx="11.6" cy="12.2" r="10.4" fill="none" stroke="#fff" stroke-width="1.7"/><path d="M1.4 1.4l21.2 21.2" stroke="#fff" stroke-width="1.7"/></svg>
<svg class="a" style="left:827px;top:98px;" width="8" height="4" viewBox="0 0 8 4"><g transform="translate(0.6 0)"><path d="M0 0h7.6L3.8 4z" fill="#111"/></g></svg>
<svg class="a" style="left:841px;top:88px;" width="24" height="24" viewBox="0 0 24 24"><path d="M22.6 22.4L11 10.6" stroke="#6b6b71" stroke-width="2" stroke-linecap="round"/><path d="M7.6 7.2l8.600 1.800-6.800 6.800z" fill="#6b6b71"/><path d="M6 3.600h9.400" stroke="#6b6b71" stroke-width="1.800" stroke-linecap="round"/><path d="M3.600 6.200l-2.400 4.800" stroke="#6b6b71" stroke-width="1.800" stroke-linecap="round"/><circle cx="4.800" cy="3.800" r="3" fill="#f0d42a" stroke="#b59b14" stroke-width="0.8"/></svg>
<svg class="a" style="left:872px;top:88px;" width="24" height="24" viewBox="0 0 24 24"><rect x="0" y="0" width="10.4" height="24" fill="#46464e"/><rect x="12.6" y="0.5" width="11" height="23" fill="#f0d42a" stroke="#46464e" stroke-width="1"/><path d="M10 12h8" stroke="#46464e" stroke-width="1.600"/><path d="M20.800 12l-4.400-3.400v6.800z" fill="#46464e"/></svg>
<div class="a" style="left:907px;top:88px;width:1px;height:24px;background:#cfcfcf"></div>
<svg class="a" style="left:920px;top:88px;" width="19" height="24" viewBox="0 0 19 24"><rect x="9.6" y="8.400" width="8.600" height="15.400" rx="1" fill="#46464e"/><rect x="12" y="4.600" width="3.800" height="3" fill="#46464e"/><rect x="13" y="3" width="2" height="2" fill="#46464e"/><path d="M10.600 5.800L1 2.400M10.600 5.800L0.400 5M10.600 5.800L2.600 0.800M10.600 5.800L0.800 7.400" stroke="#f0d42a" stroke-width="1.300"/></svg>
<svg class="a" style="left:949px;top:98px;" width="8" height="4" viewBox="0 0 8 4"><path d="M0 0h7.6L3.8 4z" fill="#111"/></svg>
<svg class="a" style="left:965px;top:88px;" width="18" height="24" viewBox="0 0 18 24"><path d="M9 3.200C9 0.800 13 0.600 13.600 2.200" fill="none" stroke="#6b6b71" stroke-width="1.200"/><ellipse cx="9" cy="7.0" rx="8" ry="3.800" fill="none" stroke="#6b6b71" stroke-width="1.300"/><ellipse cx="9" cy="10.5" rx="8" ry="3.800" fill="none" stroke="#6b6b71" stroke-width="1.300"/><ellipse cx="9" cy="14.0" rx="8" ry="3.800" fill="none" stroke="#6b6b71" stroke-width="1.300"/><ellipse cx="9" cy="17.5" rx="8" ry="3.800" fill="none" stroke="#6b6b71" stroke-width="1.300"/></svg>
<svg class="a" style="left:991px;top:98px;" width="8" height="4" viewBox="0 0 8 4"><g transform="translate(0.6 0)"><path d="M0 0h7.6L3.8 4z" fill="#111"/></g></svg>
<svg class="a" style="left:1254px;top:88px;" width="24" height="24" viewBox="0 0 24 24"><circle cx="12" cy="12" r="11.300" fill="#e9cb2b" stroke="#9b9b8c" stroke-width="1"/><text x="12" y="18" text-anchor="middle" font-family="Liberation Sans, sans-serif" font-weight="bold" font-size="17" fill="#7c7c7c">?</text></svg>
<svg class="a" style="left:300px;top:150px;" width="24" height="24" viewBox="0 0 24 24"><path d="M22.2 22L10.5 10.4" stroke="#707074" stroke-width="2.4" stroke-linecap="round"/><path d="M1.2 1.600l15 4.400-10.600 10.400z" fill="#c9c9c9" stroke="#707074" stroke-width="1.500" stroke-linejoin="round"/></svg>
<svg class="a" style="left:300px;top:180px;" width="24" height="24" viewBox="0 0 24 24"><path d="M1.400 23L23 1.600" stroke="#707074" stroke-width="1.900" stroke-linecap="round"/></svg>
<svg class="a" style="left:300px;top:214px;" width="24" height="16" viewBox="0 0 24 16"><rect x="1.2" y="1.500" width="21.800" height="12.500" fill="none" stroke="#707074" stroke-width="1.700"/></svg>
<svg class="a" style="left:300px;top:239px;" width="24" height="24" viewBox="0 0 24 24"><circle cx="12.3" cy="12.400" r="10.400" fill="none" stroke="#707074" stroke-width="1.800"/></svg>
<svg class="a" style="left:300px;top:273px;" width="24" height="17" viewBox="0 0 24 17"><ellipse cx="12.3" cy="8.400" rx="10.600" ry="6.400" fill="none" stroke="#707074" stroke-width="1.800"/></svg>
<svg class="a" style="left:300px;top:301px;" width="24" height="22" viewBox="0 0 24 22"><path d="M6.400 1.600h11.600l5 9.400-5 9.400H6.400l-5-9.400z" fill="none" stroke="#707074" stroke-width="1.800" stroke-linejoin="round"/></svg>
<svg class="a" style="left:300px;top:330px;" width="24" height="24" viewBox="0 0 24 24"><path d="M1.600 22.200L21.800 2V22.400" fill="none" stroke="#707074" stroke-width="2.300" stroke-linejoin="round" stroke-linecap="round"/></svg>
<svg class="a" style="left:300px;top:360px;" width="24" height="24" viewBox="0 0 24 24"><path d="M0.800 11.500C2 6 9 5.500 11.800 11.500S22 17 23.400 11.500" fill="none" stroke="#707074" stroke-width="1.600"/><path d="M11.800 1.500v21" stroke="#9a9a9a" stroke-width="1.600"/><ellipse cx="11.800" cy="1.600" rx="2.600" ry="1.300" fill="#f0d42a"/><ellipse cx="11.800" cy="22.300" rx="2.600" ry="1.300" fill="#f0d42a"/><circle cx="11.800" cy="11.500" r="2.500" fill="#f0d42a"/></svg>
<svg class="a" style="left:300px;top:391px;" width="24" height="23" viewBox="0 0 24 23"><path d="M2.600 1.400h18.500M11.800 1.400V22.200" fill="none" stroke="#707074" stroke-width="2.400"/></svg>
<svg class="a" style="left:300px;top:420px;" width="24" height="24" viewBox="0 0 24 24"><rect x="0.600" y="0.300" width="23" height="23.300" rx="2" fill="#46464e"/><rect x="2" y="1.800" width="20.200" height="20.300" rx="0.800" fill="#fff"/><path d="M0.800 16.500l6.800-6.500 4.400 4 3.800-3.400 7.400 6.400v4.600a2 2 0 0 1-2 2H2.800a2 2 0 0 1-2-2z" fill="#46464e"/><circle cx="14.800" cy="6.400" r="2.300" fill="#46464e"/></svg>
<svg class="a" style="left:300px;top:456px;" width="24" height="14" viewBox="0 0 24 14"><text x="12" y="11.500" text-anchor="middle" font-family="Liberation Sans, sans-serif" font-weight="bold" font-size="14.500" fill="#707074" textLength="24" lengthAdjust="spacingAndGlyphs">&lt;/&gt;</text></svg>
<svg class="a" style="left:0;top:0" width="1034" height="582" viewBox="0 0 1034 582"><path d="M478.46 469.77A32.8 32.8 0 1 1 512.74 469.77Z" fill="#fff" stroke="#dedede" stroke-width="2.200"/><path d="M481.35 466.48L483.35 463.02" stroke="#c8c8c8" stroke-width="0.800"/><path d="M478.25 464.41L479.47 462.82" stroke="#dcdcdc" stroke-width="0.800"/><path d="M475.45 461.95L476.86 460.54" stroke="#dcdcdc" stroke-width="0.800"/><path d="M472.99 459.15L474.58 457.93" stroke="#dcdcdc" stroke-width="0.800"/><path d="M470.92 456.05L472.65 455.05" stroke="#dcdcdc" stroke-width="0.800"/><path d="M469.27 452.71L472.96 451.18" stroke="#c8c8c8" stroke-width="0.800"/><path d="M468.07 449.18L470.00 448.66" stroke="#dcdcdc" stroke-width="0.800"/><path d="M467.34 445.52L469.33 445.26" stroke="#dcdcdc" stroke-width="0.800"/><path d="M467.10 441.80L469.10 441.80" stroke="#dcdcdc" stroke-width="0.800"/><path d="M467.34 438.08L469.33 438.34" stroke="#dcdcdc" stroke-width="0.800"/><path d="M468.07 434.42L471.93 435.46" stroke="#c8c8c8" stroke-width="0.800"/><path d="M469.27 430.89L471.12 431.66" stroke="#dcdcdc" stroke-width="0.800"/><path d="M470.92 427.55L472.65 428.55" stroke="#dcdcdc" stroke-width="0.800"/><path d="M472.99 424.45L474.58 425.67" stroke="#dcdcdc" stroke-width="0.800"/><path d="M475.45 421.65L476.86 423.06" stroke="#dcdcdc" stroke-width="0.800"/><path d="M478.25 419.19L480.69 422.36" stroke="#c8c8c8" stroke-width="0.800"/><path d="M481.35 417.12L482.35 418.85" stroke="#dcdcdc" stroke-width="0.800"/><path d="M484.69 415.47L485.46 417.32" stroke="#dcdcdc" stroke-width="0.800"/><path d="M488.22 414.27L488.74 416.20" stroke="#dcdcdc" stroke-width="0.800"/><path d="M491.88 413.54L492.14 415.53" stroke="#dcdcdc" stroke-width="0.800"/><path d="M495.60 413.30L495.60 417.30" stroke="#c8c8c8" stroke-width="0.800"/><path d="M499.32 413.54L499.06 415.53" stroke="#dcdcdc" stroke-width="0.800"/><path d="M502.98 414.27L502.46 416.20" stroke="#dcdcdc" stroke-width="0.800"/><path d="M506.51 415.47L505.74 417.32" stroke="#dcdcdc" stroke-width="0.800"/><path d="M509.85 417.12L508.85 418.85" stroke="#dcdcdc" stroke-width="0.800"/><path d="M512.95 419.19L510.51 422.36" stroke="#c8c8c8" stroke-width="0.800"/><path d="M515.75 421.65L514.34 423.06" stroke="#dcdcdc" stroke-width="0.800"/><path d="M518.21 424.45L516.62 425.67" stroke="#dcdcdc" stroke-width="0.800"/><path d="M520.28 427.55L518.55 428.55" stroke="#dcdcdc" stroke-width="0.800"/><path d="M521.93 430.89L520.08 431.66" stroke="#dcdcdc" stroke-width="0.800"/><path d="M523.13 434.42L519.27 435.46" stroke="#c8c8c8" stroke-width="0.800"/><path d="M523.86 438.08L521.87 438.34" stroke="#dcdcdc" stroke-width="0.800"/><path d="M524.10 441.80L522.10 441.80" stroke="#dcdcdc" stroke-width="0.800"/><path d="M523.86 445.52L521.87 445.26" stroke="#dcdcdc" stroke-width="0.800"/><path d="M523.13 449.18L521.20 448.66" stroke="#dcdcdc" stroke-width="0.800"/><path d="M521.93 452.71L518.24 451.18" stroke="#c8c8c8" stroke-width="0.800"/><path d="M520.28 456.05L518.55 455.05" stroke="#dcdcdc" stroke-width="0.800"/><path d="M518.21 459.15L516.62 457.93" stroke="#dcdcdc" stroke-width="0.800"/><path d="M515.75 461.95L514.34 460.54" stroke="#dcdcdc" stroke-width="0.800"/><path d="M512.95 464.41L511.73 462.82" stroke="#dcdcdc" stroke-width="0.800"/><path d="M509.85 466.48L507.85 463.02" stroke="#c8c8c8" stroke-width="0.800"/><circle cx="495.6" cy="441.8" r="3.500" fill="#dcdcdc"/><path d="M492.8 440.8L495.6 419.3L498.40000000000003 440.8z" fill="#f2c500"/><path d="M495.6 412.8l2.200 2.400-2.200 2.400-2.200-2.400z" fill="#f21d0d"/><text x="495.6" y="464.3" text-anchor="middle" font-family="Liberation Sans, sans-serif" font-size="7.500" fill="#666">0</text><path d="M569.16 469.77A32.8 32.8 0 1 1 603.44 469.77Z" fill="#fff" stroke="#dedede" stroke-width="2.200"/><path d="M572.05 466.48L574.05 463.02" stroke="#c8c8c8" stroke-width="0.800"/><path d="M568.95 464.41L570.17 462.82" stroke="#dcdcdc" stroke-width="0.800"/><path d="M566.15 461.95L567.56 460.54" stroke="#dcdcdc" stroke-width="0.800"/><path d="M563.69 459.15L565.28 457.93" stroke="#dcdcdc" stroke-width="0.800"/><path d="M561.62 456.05L563.35 455.05" stroke="#dcdcdc" stroke-width="0.800"/><path d="M559.97 452.71L563.66 451.18" stroke="#c8c8c8" stroke-width="0.800"/><path d="M558.77 449.18L560.70 448.66" stroke="#dcdcdc" stroke-width="0.800"/><path d="M558.04 445.52L560.03 445.26" stroke="#dcdcdc" stroke-width="0.800"/><path d="M557.80 441.80L559.80 441.80" stroke="#dcdcdc" stroke-width="0.800"/><path d="M558.04 438.08L560.03 438.34" stroke="#dcdcdc" stroke-width="0.800"/><path d="M558.77 434.42L562.63 435.46" stroke="#c8c8c8" stroke-width="0.800"/><path d="M559.97 430.89L561.82 431.66" stroke="#dcdcdc" stroke-width="0.800"/><path d="M561.62 427.55L563.35 428.55" stroke="#dcdcdc" stroke-width="0.800"/><path d="M563.69 424.45L565.28 425.67" stroke="#dcdcdc" stroke-width="0.800"/><path d="M566.15 421.65L567.56 423.06" stroke="#dcdcdc" stroke-width="0.800"/><path d="M568.95 419.19L571.39 422.36" stroke="#c8c8c8" stroke-width="0.800"/><path d="M572.05 417.12L573.05 418.85" stroke="#dcdcdc" stroke-width="0.800"/><path d="M575.39 415.47L576.16 417.32" stroke="#dcdcdc" stroke-width="0.800"/><path d="M578.92 414.27L579.44 416.20" stroke="#dcdcdc" stroke-width="0.800"/><path d="M582.58 413.54L582.84 415.53" stroke="#dcdcdc" stroke-width="0.800"/><path d="M586.30 413.30L586.30 417.30" stroke="#c8c8c8" stroke-width="0.800"/><path d="M590.02 413.54L589.76 415.53" stroke="#dcdcdc" stroke-width="0.800"/><path d="M593.68 414.27L593.16 416.20" stroke="#dcdcdc" stroke-width="0.800"/><path d="M597.21 415.47L596.44 417.32" stroke="#dcdcdc" stroke-width="0.800"/><path d="M600.55 417.12L599.55 418.85" stroke="#dcdcdc" stroke-width="0.800"/><path d="M603.65 419.19L601.21 422.36" stroke="#c8c8c8" stroke-width="0.800"/><path d="M606.45 421.65L605.04 423.06" stroke="#dcdcdc" stroke-width="0.800"/><path d="M608.91 424.45L607.32 425.67" stroke="#dcdcdc" stroke-width="0.800"/><path d="M610.98 427.55L609.25 428.55" stroke="#dcdcdc" stroke-width="0.800"/><path d="M612.63 430.89L610.78 431.66" stroke="#dcdcdc" stroke-width="0.800"/><path d="M613.83 434.42L609.97 435.46" stroke="#c8c8c8" stroke-width="0.800"/><path d="M614.56 438.08L612.57 438.34" stroke="#dcdcdc" stroke-width="0.800"/><path d="M614.80 441.80L612.80 441.80" stroke="#dcdcdc" stroke-width="0.800"/><path d="M614.56 445.52L612.57 445.26" stroke="#dcdcdc" stroke-width="0.800"/><path d="M613.83 449.18L611.90 448.66" stroke="#dcdcdc" stroke-width="0.800"/><path d="M612.63 452.71L608.94 451.18" stroke="#c8c8c8" stroke-width="0.800"/><path d="M610.98 456.05L609.25 455.05" stroke="#dcdcdc" stroke-width="0.800"/><path d="M608.91 459.15L607.32 457.93" stroke="#dcdcdc" stroke-width="0.800"/><path d="M606.45 461.95L605.04 460.54" stroke="#dcdcdc" stroke-width="0.800"/><path d="M603.65 464.41L602.43 462.82" stroke="#dcdcdc" stroke-width="0.800"/><path d="M600.55 466.48L598.55 463.02" stroke="#c8c8c8" stroke-width="0.800"/><circle cx="586.3" cy="441.8" r="3.500" fill="#dcdcdc"/><path d="M583.5 440.8L586.3 419.3L589.0999999999999 440.8z" fill="#f2c500"/><path d="M586.3 412.8l2.200 2.400-2.200 2.400-2.200-2.400z" fill="#f21d0d"/><text x="586.3" y="464.3" text-anchor="middle" font-family="Liberation Sans, sans-serif" font-size="7.500" fill="#666">0</text><g font-family="Liberation Sans, sans-serif" font-size="7" fill="#6a6a70" text-anchor="middle"><text x="494.500" y="478">T{Pressure A}</text><text x="585.500" y="478">T{Pressure B}</text></g><rect x="648.2" y="400.800" width="15.600" height="70.300" rx="1.500" fill="#e9e9e9"/><rect x="649.8" y="403" width="12.300" height="66.600" fill="#f0d700"/><path d="M656.3 409.66h5.800" stroke="#fbf3b8" stroke-width="0.800"/><path d="M656.3 416.32h5.800" stroke="#fbf3b8" stroke-width="0.800"/><path d="M656.3 422.98h5.800" stroke="#fbf3b8" stroke-width="0.800"/><path d="M656.3 429.64h5.800" stroke="#fbf3b8" stroke-width="0.800"/><path d="M656.3 436.30h5.800" stroke="#fbf3b8" stroke-width="0.800"/><path d="M656.3 442.96h5.800" stroke="#fbf3b8" stroke-width="0.800"/><path d="M656.3 449.62h5.800" stroke="#fbf3b8" stroke-width="0.800"/><path d="M656.3 456.28h5.800" stroke="#fbf3b8" stroke-width="0.800"/><path d="M656.3 462.94h5.800" stroke="#fbf3b8" stroke-width="0.800"/><path d="M646.0 403.00h2" stroke="#ececec" stroke-width="0.500"/><path d="M646.0 409.66h2" stroke="#ececec" stroke-width="0.500"/><path d="M646.0 416.32h2" stroke="#ececec" stroke-width="0.500"/><path d="M646.0 422.98h2" stroke="#ececec" stroke-width="0.500"/><path d="M646.0 429.64h2" stroke="#ececec" stroke-width="0.500"/><path d="M646.0 436.30h2" stroke="#ececec" stroke-width="0.500"/><path d="M646.0 442.96h2" stroke="#ececec" stroke-width="0.500"/><path d="M646.0 449.62h2" stroke="#ececec" stroke-width="0.500"/><path d="M646.0 456.28h2" stroke="#ececec" stroke-width="0.500"/><path d="M646.0 462.94h2" stroke="#ececec" stroke-width="0.500"/><path d="M646.0 469.60h2" stroke="#ececec" stroke-width="0.500"/><path d="M646.2 468.300l1.200 1.300-1.200 1.300-1.200-1.300z" fill="#f21d0d"/><text x="644.0" y="402" font-family="Liberation Sans, sans-serif" font-size="4.500" fill="#ddd" text-anchor="middle">100</text><text x="655.0" y="480.300" font-family="Liberation Sans, sans-serif" font-size="5.500" fill="#6a6a70" text-anchor="middle">T{Temp A}</text><text x="655.0" y="488.300" font-family="Liberation Sans, sans-serif" font-size="7.500" fill="#555" text-anchor="middle">0</text><rect x="711.3" y="400.800" width="15.600" height="70.300" rx="1.500" fill="#e9e9e9"/><rect x="712.9" y="403" width="12.300" height="66.600" fill="#f0d700"/><path d="M719.4 409.66h5.800" stroke="#fbf3b8" stroke-width="0.800"/><path d="M719.4 416.32h5.800" stroke="#fbf3b8" stroke-width="0.800"/><path d="M719.4 422.98h5.800" stroke="#fbf3b8" stroke-width="0.800"/><path d="M719.4 429.64h5.800" stroke="#fbf3b8" stroke-width="0.800"/><path d="M719.4 436.30h5.800" stroke="#fbf3b8" stroke-width="0.800"/><path d="M719.4 442.96h5.800" stroke="#fbf3b8" stroke-width="0.800"/><path d="M719.4 449.62h5.800" stroke="#fbf3b8" stroke-width="0.800"/><path d="M719.4 456.28h5.800" stroke="#fbf3b8" stroke-width="0.800"/><path d="M719.4 462.94h5.800" stroke="#fbf3b8" stroke-width="0.800"/><path d="M709.1 403.00h2" stroke="#ececec" stroke-width="0.500"/><path d="M709.1 409.66h2" stroke="#ececec" stroke-width="0.500"/><path d="M709.1 416.32h2" stroke="#ececec" stroke-width="0.500"/><path d="M709.1 422.98h2" stroke="#ececec" stroke-width="0.500"/><path d="M709.1 429.64h2" stroke="#ececec" stroke-width="0.500"/><path d="M709.1 436.30h2" stroke="#ececec" stroke-width="0.500"/><path d="M709.1 442.96h2" stroke="#ececec" stroke-width="0.500"/><path d="M709.1 449.62h2" stroke="#ececec" stroke-width="0.500"/><path d="M709.1 456.28h2" stroke="#ececec" stroke-width="0.500"/><path d="M709.1 462.94h2" stroke="#ececec" stroke-width="0.500"/><path d="M709.1 469.60h2" stroke="#ececec" stroke-width="0.500"/><path d="M709.3 468.300l1.200 1.300-1.200 1.300-1.200-1.300z" fill="#f21d0d"/><text x="707.1" y="402" font-family="Liberation Sans, sans-serif" font-size="4.500" fill="#ddd" text-anchor="middle">100</text><text x="718.1" y="480.300" font-family="Liberation Sans, sans-serif" font-size="5.500" fill="#6a6a70" text-anchor="middle">T{Temp B}</text><text x="718.1" y="488.300" font-family="Liberation Sans, sans-serif" font-size="7.500" fill="#555" text-anchor="middle">0</text><rect x="774.4" y="400.800" width="15.600" height="70.300" rx="1.500" fill="#e9e9e9"/><rect x="776.0" y="403" width="12.300" height="66.600" fill="#f0d700"/><path d="M782.5 409.66h5.800" stroke="#fbf3b8" stroke-width="0.800"/><path d="M782.5 416.32h5.800" stroke="#fbf3b8" stroke-width="0.800"/><path d="M782.5 422.98h5.800" stroke="#fbf3b8" stroke-width="0.800"/><path d="M782.5 429.64h5.800" stroke="#fbf3b8" stroke-width="0.800"/><path d="M782.5 436.30h5.800" stroke="#fbf3b8" stroke-width="0.800"/><path d="M782.5 442.96h5.800" stroke="#fbf3b8" stroke-width="0.800"/><path d="M782.5 449.62h5.800" stroke="#fbf3b8" stroke-width="0.800"/><path d="M782.5 456.28h5.800" stroke="#fbf3b8" stroke-width="0.800"/><path d="M782.5 462.94h5.800" stroke="#fbf3b8" stroke-width="0.800"/><path d="M772.2 403.00h2" stroke="#ececec" stroke-width="0.500"/><path d="M772.2 409.66h2" stroke="#ececec" stroke-width="0.500"/><path d="M772.2 416.32h2" stroke="#ececec" stroke-width="0.500"/><path d="M772.2 422.98h2" stroke="#ececec" stroke-width="0.500"/><path d="M772.2 429.64h2" stroke="#ececec" stroke-width="0.500"/><path d="M772.2 436.30h2" stroke="#ececec" stroke-width="0.500"/><path d="M772.2 442.96h2" stroke="#ececec" stroke-width="0.500"/><path d="M772.2 449.62h2" stroke="#ececec" stroke-width="0.500"/><path d="M772.2 456.28h2" stroke="#ececec" stroke-width="0.500"/><path d="M772.2 462.94h2" stroke="#ececec" stroke-width="0.500"/><path d="M772.2 469.60h2" stroke="#ececec" stroke-width="0.500"/><path d="M772.4 468.300l1.200 1.300-1.200 1.300-1.200-1.300z" fill="#f21d0d"/><text x="770.2" y="402" font-family="Liberation Sans, sans-serif" font-size="4.500" fill="#ddd" text-anchor="middle">100</text><text x="781.2" y="480.300" font-family="Liberation Sans, sans-serif" font-size="5.500" fill="#6a6a70" text-anchor="middle">T{Temp C}</text><text x="781.2" y="488.300" font-family="Liberation Sans, sans-serif" font-size="7.500" fill="#555" text-anchor="middle">0</text><rect x="837.5" y="400.800" width="15.600" height="70.300" rx="1.500" fill="#e9e9e9"/><rect x="839.1" y="403" width="12.300" height="66.600" fill="#f0d700"/><path d="M845.6 409.66h5.800" stroke="#fbf3b8" stroke-width="0.800"/><path d="M845.6 416.32h5.800" stroke="#fbf3b8" stroke-width="0.800"/><path d="M845.6 422.98h5.800" stroke="#fbf3b8" stroke-width="0.800"/><path d="M845.6 429.64h5.800" stroke="#fbf3b8" stroke-width="0.800"/><path d="M845.6 436.30h5.800" stroke="#fbf3b8" stroke-width="0.800"/><path d="M845.6 442.96h5.800" stroke="#fbf3b8" stroke-width="0.800"/><path d="M845.6 449.62h5.800" stroke="#fbf3b8" stroke-width="0.800"/><path d="M845.6 456.28h5.800" stroke="#fbf3b8" stroke-width="0.800"/><path d="M845.6 462.94h5.800" stroke="#fbf3b8" stroke-width="0.800"/><path d="M835.3 403.00h2" stroke="#ececec" stroke-width="0.500"/><path d="M835.3 409.66h2" stroke="#ececec" stroke-width="0.500"/><path d="M835.3 416.32h2" stroke="#ececec" stroke-width="0.500"/><path d="M835.3 422.98h2" stroke="#ececec" stroke-width="0.500"/><path d="M835.3 429.64h2" stroke="#ececec" stroke-width="0.500"/><path d="M835.3 436.30h2" stroke="#ececec" stroke-width="0.500"/><path d="M835.3 442.96h2" stroke="#ececec" stroke-width="0.500"/><path d="M835.3 449.62h2" stroke="#ececec" stroke-width="0.500"/><path d="M835.3 456.28h2" stroke="#ececec" stroke-width="0.500"/><path d="M835.3 462.94h2" stroke="#ececec" stroke-width="0.500"/><path d="M835.3 469.60h2" stroke="#ececec" stroke-width="0.500"/><path d="M835.5 468.300l1.200 1.300-1.200 1.300-1.200-1.300z" fill="#f21d0d"/><text x="833.3" y="402" font-family="Liberation Sans, sans-serif" font-size="4.500" fill="#ddd" text-anchor="middle">100</text><text x="844.3" y="480.300" font-family="Liberation Sans, sans-serif" font-size="5.500" fill="#6a6a70" text-anchor="middle">T{Temp D}</text><text x="844.3" y="488.300" font-family="Liberation Sans, sans-serif" font-size="7.500" fill="#555" text-anchor="middle">0</text><rect x="900.6" y="400.800" width="15.600" height="70.300" rx="1.500" fill="#e9e9e9"/><rect x="902.2" y="403" width="12.300" height="66.600" fill="#f0d700"/><path d="M908.7 409.66h5.800" stroke="#fbf3b8" stroke-width="0.800"/><path d="M908.7 416.32h5.800" stroke="#fbf3b8" stroke-width="0.800"/><path d="M908.7 422.98h5.800" stroke="#fbf3b8" stroke-width="0.800"/><path d="M908.7 429.64h5.800" stroke="#fbf3b8" stroke-width="0.800"/><path d="M908.7 436.30h5.800" stroke="#fbf3b8" stroke-width="0.800"/><path d="M908.7 442.96h5.800" stroke="#fbf3b8" stroke-width="0.800"/><path d="M908.7 449.62h5.800" stroke="#fbf3b8" stroke-width="0.800"/><path d="M908.7 456.28h5.800" stroke="#fbf3b8" stroke-width="0.800"/><path d="M908.7 462.94h5.800" stroke="#fbf3b8" stroke-width="0.800"/><path d="M898.4 403.00h2" stroke="#ececec" stroke-width="0.500"/><path d="M898.4 409.66h2" stroke="#ececec" stroke-width="0.500"/><path d="M898.4 416.32h2" stroke="#ececec" stroke-width="0.500"/><path d="M898.4 422.98h2" stroke="#ececec" stroke-width="0.500"/><path d="M898.4 429.64h2" stroke="#ececec" stroke-width="0.500"/><path d="M898.4 436.30h2" stroke="#ececec" stroke-width="0.500"/><path d="M898.4 442.96h2" stroke="#ececec" stroke-width="0.500"/><path d="M898.4 449.62h2" stroke="#ececec" stroke-width="0.500"/><path d="M898.4 456.28h2" stroke="#ececec" stroke-width="0.500"/><path d="M898.4 462.94h2" stroke="#ececec" stroke-width="0.500"/><path d="M898.4 469.60h2" stroke="#ececec" stroke-width="0.500"/><path d="M898.6 468.300l1.200 1.300-1.200 1.300-1.200-1.300z" fill="#f21d0d"/><text x="896.4" y="402" font-family="Liberation Sans, sans-serif" font-size="4.500" fill="#ddd" text-anchor="middle">100</text><text x="907.4" y="480.300" font-family="Liberation Sans, sans-serif" font-size="5.500" fill="#6a6a70" text-anchor="middle">T{Temp E}</text><text x="907.4" y="488.300" font-family="Liberation Sans, sans-serif" font-size="7.500" fill="#555" text-anchor="middle">0</text><g><rect x="782" y="321.200" width="91" height="6.200" fill="#69686d"/><rect x="807.100" y="280.200" width="81.900" height="43.900" fill="#69686d"/><rect x="877.100" y="271.100" width="11.900" height="53" fill="#69686d"/><rect x="872.200" y="271.100" width="4.900" height="10.700" fill="#999"/><rect x="813.800" y="260.600" width="8.200" height="20" fill="#69686d"/><path d="M812.100 260.600h11.600l1 3.100h-13.600z" fill="#69686d"/><rect x="822" y="272" width="26" height="9" fill="#69686d"/><rect x="832" y="269.100" width="7.900" height="4" fill="#69686d"/><rect x="842" y="270.900" width="6" height="4" fill="#69686d"/><rect x="822" y="272.600" width="2.200" height="7.600" fill="#999"/><rect x="839.900" y="272.600" width="2.100" height="7.600" fill="#999"/><path d="M848.600 261.200h11.400l-2.200 10.800-7.100 6.900h-2.700l0.600-6.900z" fill="#f0d700"/><rect x="778.600" y="255.700" width="28.500" height="16.900" fill="#69686d"/><rect x="782" y="260.100" width="12.100" height="9" fill="#f0d700"/><rect x="797.900" y="257.900" width="2.400" height="11.100" fill="#999"/><rect x="801.900" y="257.900" width="2.500" height="11.100" fill="#999"/><rect x="778.600" y="275" width="28.500" height="43.900" fill="#999"/><rect x="786.700" y="281.800" width="12.500" height="28.700" rx="1" fill="#e6e6e6"/><text x="793" y="297.800" font-family="Liberation Sans, sans-serif" font-size="4.500" fill="#8a6a70" text-anchor="middle">T{On}</text><rect x="811.100" y="291.600" width="28.800" height="31.400" fill="#999"/><rect x="839.900" y="294.800" width="10.100" height="9.200" fill="#999"/><rect x="853.500" y="281.800" width="23.600" height="21.900" fill="#999"/><rect x="857" y="285.1" width="16.900" height="2.200" fill="#dcdcdc"/><rect x="857" y="289.6" width="16.900" height="2.200" fill="#dcdcdc"/><rect x="857" y="293.9" width="16.900" height="2.200" fill="#dcdcdc"/><rect x="857" y="298.2" width="16.900" height="2.200" fill="#dcdcdc"/><rect x="862.100" y="307" width="15" height="13.900" fill="#999"/><rect x="865.400" y="310.800" width="8.500" height="2" fill="#dcdcdc"/><rect x="865.400" y="314.900" width="8.500" height="2.100" fill="#dcdcdc"/></g><rect x="549.500" y="408.500" width="74" height="73" fill="none" stroke="#000" stroke-width="1" stroke-dasharray="4 3"/><rect x="545.5" y="404.5" width="8" height="8" fill="#ff00e6" stroke="#000" stroke-width="1"/><rect x="582.5" y="404.5" width="8" height="8" fill="#ff00e6" stroke="#000" stroke-width="1"/><rect x="619.5" y="404.5" width="8" height="8" fill="#ff00e6" stroke="#000" stroke-width="1"/><rect x="545.5" y="440.5" width="8" height="8" fill="#ff00e6" stroke="#000" stroke-width="1"/><rect x="619.5" y="440.5" width="8" height="8" fill="#ff00e6" stroke="#000" stroke-width="1"/><rect x="545.5" y="477.5" width="8" height="8" fill="#ff00e6" stroke="#000" stroke-width="1"/><rect x="582.5" y="477.5" width="8" height="8" fill="#ff00e6" stroke="#000" stroke-width="1"/><rect x="619.5" y="477.5" width="8" height="8" fill="#ff00e6" stroke="#000" stroke-width="1"/><rect x="582.500" y="440.500" width="8" height="8" fill="#ffff00" stroke="#000" stroke-width="1"/></svg>
<div class="a t" style="left:346px;top:593.24px;line-height:20px;font-family:'Liberation Sans',sans-serif;font-size:12px;letter-spacing:0.078px;">x:</div>
<div class="a" style="left:366px;top:592px;width:49.6px;height:19.5px;background:#fff;border:1px solid #7a7a7a"></div>
<div class="a t" style="left:369.4px;top:593.22px;line-height:20px;font-family:'Liberation Sans',sans-serif;font-size:11.5px;letter-spacing:-0.083px;">304.612</div>
<div class="a t" style="left:425px;top:593.24px;line-height:20px;font-family:'Liberation Sans',sans-serif;font-size:12px;letter-spacing:0.078px;">y:</div>
<div class="a" style="left:445px;top:592px;width:49.6px;height:19.5px;background:#fff;border:1px solid #7a7a7a"></div>
<div class="a t" style="left:448.4px;top:593.22px;line-height:20px;font-family:'Liberation Sans',sans-serif;font-size:11.5px;letter-spacing:-0.083px;">534.046</div>
<div class="a t" style="left:503.6px;top:593.24px;line-height:20px;font-family:'Liberation Sans',sans-serif;font-size:12px;letter-spacing:-0.250px;">w:</div>
<div class="a" style="left:526px;top:592px;width:49.6px;height:19.5px;background:#fff;border:1px solid #7a7a7a"></div>
<div class="a t" style="left:529.4px;top:593.22px;line-height:20px;font-family:'Liberation Sans',sans-serif;font-size:11.5px;letter-spacing:-0.031px;">186.86</div>
<svg class="a" style="left:585px;top:595px;" width="13" height="15" viewBox="0 0 13 15"><g transform="translate(0.6 0)"><path d="M2.600 7V4.200a3 3 0 0 1 5.800-1" fill="none" stroke="#777" stroke-width="1.700"/><rect x="3.600" y="6.800" width="9" height="7.600" rx="1" fill="#777"/><rect x="7.200" y="9.400" width="1.800" height="2.800" fill="#fff"/></g></svg>
<div class="a t" style="left:612px;top:593.24px;line-height:20px;font-family:'Liberation Sans',sans-serif;font-size:12px;letter-spacing:-0.258px;">h:</div>
<div class="a" style="left:633px;top:592px;width:49.6px;height:19.5px;background:#fff;border:1px solid #7a7a7a"></div>
<div class="a t" style="left:636.4px;top:593.22px;line-height:20px;font-family:'Liberation Sans',sans-serif;font-size:11.5px;letter-spacing:-0.031px;">186.86</div>
<div class="a t" style="left:692px;top:592.32px;line-height:20px;font-family:'Liberation Sans',sans-serif;font-size:11.5px;color:#808080;letter-spacing:-0.212px;">fill:</div>
<div class="a t" style="left:754px;top:592.32px;line-height:20px;font-family:'Liberation Sans',sans-serif;font-size:11.5px;color:#808080;letter-spacing:-0.074px;">stroke:</div>
<svg class="a" style="left:716px;top:592px;" width="30" height="19" viewBox="0 0 30 19"><rect x="0.500" y="0.500" width="29" height="18" fill="#fff" stroke="#000"/><path d="M1.500 1.500l27 16M28.500 1.500l-27 16" stroke="#c6c6c6" stroke-width="1.400"/></svg>
<svg class="a" style="left:799px;top:592px;" width="30" height="19" viewBox="0 0 30 19"><rect x="0.500" y="0.500" width="29" height="18" fill="#fff" stroke="#000"/><path d="M1.500 1.500l27 16M28.500 1.500l-27 16" stroke="#c6c6c6" stroke-width="1.400"/></svg>
<div class="a" style="left:1040px;top:125px;width:242px;height:325px;background:#fff"></div>
<div class="a" style="left:1059px;top:168px;width:222px;height:20px;background:#f5f5f5"></div>
<div class="a" style="left:1059px;top:208px;width:222px;height:20px;background:#f5f5f5"></div>
<div class="a" style="left:1059px;top:248px;width:222px;height:20px;background:#f5f5f5"></div>
<div class="a" style="left:1059px;top:288px;width:222px;height:20px;background:#f5f5f5"></div>
<div class="a" style="left:1059px;top:328px;width:222px;height:20px;background:#f5f5f5"></div>
<div class="a" style="left:1059px;top:368px;width:222px;height:20px;background:#f5f5f5"></div>
<div class="a" style="left:1049px;top:408px;width:232px;height:20px;background:#f5f5f5"></div>
<div class="a t" style="left:1043px;top:126.84px;line-height:20px;font-family:'Liberation Sans',sans-serif;font-size:12px;letter-spacing:-0.045px;">Property</div>
<div class="a t" style="left:1153px;top:126.84px;line-height:20px;font-family:'Liberation Sans',sans-serif;font-size:12px;letter-spacing:-0.362px;">Value</div>
<div class="a" style="left:1148px;top:127px;width:1px;height:21px;background:#e0e0e0"></div>
<div class="a" style="left:1149px;top:168px;width:1px;height:140px;background:#b4b4b4"></div>
<svg class="a" style="left:1037px;top:155px;" width="10" height="7" viewBox="0 0 10 7"><g transform="translate(0.5 0)"><path d="M0.800 1.100l3.900 3.900L8.600 1.100" fill="none" stroke="#333" stroke-width="1.900"/></g></svg>
<div class="a t" style="left:1052.6px;top:148.84px;line-height:20px;font-family:'Liberation Sans',sans-serif;font-size:12px;letter-spacing:-0.353px;">Parameters</div>
<div class="a t" style="left:1062px;top:168.84px;line-height:20px;font-family:'Liberation Sans',sans-serif;font-size:12px;letter-spacing:-0.258px;">base</div>
<div class="a t" style="left:1152px;top:168.84px;line-height:20px;font-family:'Liberation Sans',sans-serif;font-size:12px;letter-spacing:-0.349px;">[base] + .Pressures.Press</div>
<div class="a t" style="left:1062px;top:188.84px;line-height:20px;font-family:'Liberation Sans',sans-serif;font-size:12px;letter-spacing:-0.233px;">alarm address</div>
<div class="a t" style="left:1062px;top:208.84px;line-height:20px;font-family:'Liberation Sans',sans-serif;font-size:12px;letter-spacing:-0.220px;">enable status ...</div>
<div class="a t" style="left:1152px;top:208.84px;line-height:20px;font-family:'Liberation Sans',sans-serif;font-size:12px;color:#1a1aff;letter-spacing:-0.859px;">Yes</div>
<div class="a t" style="left:1062px;top:228.84px;line-height:20px;font-family:'Liberation Sans',sans-serif;font-size:12px;letter-spacing:-0.054px;">fire status trig...</div>
<div class="a t" style="left:1062px;top:248.84px;line-height:20px;font-family:'Liberation Sans',sans-serif;font-size:12px;letter-spacing:-0.072px;">label</div>
<div class="a t" style="left:1152px;top:248.84px;line-height:20px;font-family:'Liberation Sans',sans-serif;font-size:12px;letter-spacing:-0.516px;">T{Pressure B}</div>
<div class="a t" style="left:1062px;top:268.84px;line-height:20px;font-family:'Liberation Sans',sans-serif;font-size:12px;letter-spacing:0.904px;">minimum</div>
<div class="a t" style="left:1152px;top:268.84px;line-height:20px;font-family:'Liberation Sans',sans-serif;font-size:12px;color:#1a1aff;letter-spacing:-0.688px;">0</div>
<div class="a t" style="left:1062px;top:288.84px;line-height:20px;font-family:'Liberation Sans',sans-serif;font-size:12px;letter-spacing:0.426px;">maximum</div>
<div class="a t" style="left:1152px;top:288.84px;line-height:20px;font-family:'Liberation Sans',sans-serif;font-size:12px;color:#1a1aff;letter-spacing:-0.677px;">100</div>
<svg class="a" style="left:1051px;top:313px;" width="7" height="10" viewBox="0 0 7 10"><path d="M1.100 1.200l3.800 3.800L1.100 8.800" fill="none" stroke="#9c9c9c" stroke-width="1.900"/></svg>
<div class="a t" style="left:1062px;top:308.84px;line-height:20px;font-family:'Liberation Sans',sans-serif;font-size:12px;letter-spacing:-0.004px;">Font</div>
<svg class="a" style="left:1051px;top:333px;" width="7" height="10" viewBox="0 0 7 10"><path d="M1.100 1.200l3.800 3.800L1.100 8.800" fill="none" stroke="#9c9c9c" stroke-width="1.900"/></svg>
<div class="a t" style="left:1062px;top:328.84px;line-height:20px;font-family:'Liberation Sans',sans-serif;font-size:12px;letter-spacing:-0.172px;">Appearance</div>
<svg class="a" style="left:1051px;top:353px;" width="7" height="10" viewBox="0 0 7 10"><path d="M1.100 1.200l3.800 3.800L1.100 8.800" fill="none" stroke="#9c9c9c" stroke-width="1.900"/></svg>
<div class="a t" style="left:1062px;top:348.84px;line-height:20px;font-family:'Liberation Sans',sans-serif;font-size:12px;letter-spacing:0.092px;">Options</div>
<svg class="a" style="left:1051px;top:373px;" width="7" height="10" viewBox="0 0 7 10"><path d="M1.100 1.200l3.800 3.800L1.100 8.800" fill="none" stroke="#9c9c9c" stroke-width="1.900"/></svg>
<div class="a t" style="left:1062px;top:368.84px;line-height:20px;font-family:'Liberation Sans',sans-serif;font-size:12px;letter-spacing:-0.170px;">Security</div>
<svg class="a" style="left:1051px;top:393px;" width="7" height="10" viewBox="0 0 7 10"><path d="M1.100 1.200l3.800 3.800L1.100 8.800" fill="none" stroke="#9c9c9c" stroke-width="1.900"/></svg>
<div class="a t" style="left:1062px;top:388.84px;line-height:20px;font-family:'Liberation Sans',sans-serif;font-size:12px;letter-spacing:0.242px;">Menu</div>
<svg class="a" style="left:1040px;top:413px;" width="7" height="10" viewBox="0 0 7 10"><path d="M1.100 1.200l3.800 3.800L1.100 8.800" fill="none" stroke="#9c9c9c" stroke-width="1.900"/></svg>
<div class="a t" style="left:1052.6px;top:408.84px;line-height:20px;font-family:'Liberation Sans',sans-serif;font-size:12px;letter-spacing:-1.448px;">SVG</div>
<div class="a" style="left:1041px;top:431px;width:240px;height:19px;background:#f0f0f0"></div>
<div class="a" style="left:1056px;top:431px;width:62px;height:14.5px;background:#cdcdcd"></div>
<svg class="a" style="left:1044px;top:433px;" width="7" height="10" viewBox="0 0 7 10"><g transform="translate(0 0.5)"><path d="M5.500 1L1.500 5l4 4" fill="none" stroke="#444" stroke-width="1.700"/></g></svg>
<svg class="a" style="left:1268px;top:433px;" width="7" height="10" viewBox="0 0 7 10"><g transform="translate(0 0.5)"><path d="M1.500 1l4 4-4 4" fill="none" stroke="#444" stroke-width="1.700"/></g></svg>
<div class="a" style="left:1040px;top:455px;width:242px;height:153px;background:#fff"></div>
<div class="a" style="left:1040px;top:471.5px;width:238.5px;height:137px;background:#fff;border:1px solid #dcdcdc;border-left:none;border-bottom:none"></div>
<div class="a" style="left:1040px;top:455px;width:67.5px;height:17.5px;background:#fff;border-right:1px solid #dcdcdc"></div>
<div class="a t" style="left:1050px;top:452.82px;line-height:20px;font-family:'Liberation Sans',sans-serif;font-size:11.5px;letter-spacing:-0.623px;">Dynamics</div>
<div class="a" style="left:1040px;top:474px;width:160.5px;height:17.5px;background:#fff;border:1px solid #e3e3e3;border-left:none"></div>
<div class="a t" style="left:1043px;top:474.24px;line-height:20px;font-family:'Liberation Sans',sans-serif;font-size:12px;letter-spacing:-0.672px;">id_0</div>
<div class="a" style="left:1202px;top:475.5px;width:72.5px;height:15.5px;background:#e1e1e1;border:1px solid #adadad"></div>
<div class="a t" style="left:1202px;top:474.24px;line-height:20px;font-family:'Liberation Sans',sans-serif;font-size:12px;width:72.5px;text-align:center;letter-spacing:-0.531px;">Set id</div>
<div class="a" style="left:1079px;top:492px;width:1px;height:24px;background:#e5e5e5"></div>
<div class="a" style="left:1135px;top:492px;width:1px;height:24px;background:#e5e5e5"></div>
<div class="a" style="left:1174px;top:492px;width:1px;height:24px;background:#e5e5e5"></div>
<div class="a" style="left:1275px;top:492px;width:1px;height:24px;background:#e5e5e5"></div>
<div class="a t" style="left:1079px;top:495.47px;line-height:20px;font-family:'Liberation Sans',sans-serif;font-size:12.5px;width:56px;text-align:center;letter-spacing:-0.594px;">Event</div>
<div class="a t" style="left:1174px;top:495.47px;line-height:20px;font-family:'Liberation Sans',sans-serif;font-size:12.5px;width:101px;text-align:center;letter-spacing:0.042px;">Action</div>
<div class="a t" style="left:1143.500px;top:491.500px;font-family:'DejaVu Serif','Liberation Serif',serif;font-style:italic;font-size:15.500px;line-height:20px;color:#4a4a4a">f</div>
<svg class="a" style="left:1045px;top:496px;" width="17" height="16" viewBox="0 0 17 16"><circle cx="4.800" cy="4.800" r="3.800" fill="#e8e8e8" stroke="#8a8a8a" stroke-width="1.300"/><circle cx="3.800" cy="3.800" r="1" fill="#fff" stroke="#999" stroke-width="0.500"/><path d="M7.600 7.200l8 6.600-0.800 1.600-2-0.200-0.400-1.600-1.600-0.200-0.400-1.600-1.800-0.400-2.200-2.600z" fill="#b9b9b9" stroke="#8a8a8a" stroke-width="0.800"/></svg>
<div class="a" style="left:6px;top:634px;width:1282px;height:15.5px;background:#f0f0f0"></div>
<div class="a t" style="left:2px;top:629.84px;line-height:20px;font-family:'Liberation Sans',sans-serif;font-size:12px;letter-spacing:-0.384px;">Library</div>
<svg class="a" style="left:1276px;top:634px;" width="11" height="11" viewBox="0 0 11 11"><g transform="translate(0 0.4)"><path d="M0.500 0.500l10 10M10.500 0.500l-10 10" stroke="#333" stroke-width="1.200"/></g></svg>
<div class="a" style="left:21px;top:649.5px;width:177.5px;height:198px;background:#fff;border:1px solid #dcdcdc"></div>
<div class="a" style="left:6px;top:649.5px;width:16px;height:81px;background:#fff;border:1px solid #dcdcdc;border-right:none;border-left:none"></div>
<div class="a" style="left:6px;top:730px;width:15.5px;height:44.5px;background:#f0f0f0;border:1px solid #dcdcdc;border-left:none"></div>
<div class="a t" style="left:12.4px;top:689.3px;width:0;height:0;"><div class="a t" style="left:-32.0px;top:-10px;width:64px;line-height:20px;text-align:center;font-family:'Liberation Sans',sans-serif;font-size:11.5px;letter-spacing:-0.287px;transform:rotate(-90deg);transform-origin:50% 50%;">Referenced</div></div>
<div class="a t" style="left:12.4px;top:753.2px;width:0;height:0;"><div class="a t" style="left:-15.0px;top:-10px;width:30px;line-height:20px;text-align:center;font-family:'Liberation Sans',sans-serif;font-size:11.5px;letter-spacing:-0.780px;transform:rotate(-90deg);transform-origin:50% 50%;">Local</div></div>
<svg class="a" style="left:28px;top:658px;" width="10" height="7" viewBox="0 0 10 7"><path d="M0.800 1.100l3.900 3.900L8.600 1.100" fill="none" stroke="#333" stroke-width="1.900"/></svg>
<svg class="a" style="left:46px;top:655px;" width="16" height="12" viewBox="0 0 16 12"><path d="M0 0.300h6.200l1 1.900h5.700v9.600H0z" fill="#4a60a8"/><path d="M13.500 3.600h2.500l-2 8.200h-1.400l0.300-3z" fill="#4a60a8"/></svg>
<div class="a t" style="left:68px;top:651.84px;line-height:20px;font-family:'Liberation Sans',sans-serif;font-size:12px;letter-spacing:-1.133px;">ATVISE</div>
<div class="a" style="left:63px;top:671px;width:134px;height:19.5px;background:#d9d9d9"></div>
<svg class="a" style="left:49px;top:676px;" width="7" height="10" viewBox="0 0 7 10"><path d="M1.100 1.200l3.800 3.800L1.100 8.800" fill="none" stroke="#9c9c9c" stroke-width="1.900"/></svg>
<svg class="a" style="left:66px;top:675px;" width="16" height="12" viewBox="0 0 16 12"><path d="M0 0.300h6.200l1 1.900h5.700v9.600H0z" fill="#2f68b4"/><path d="M13.500 3.600h2.500l-2 8.200h-1.400l0.300-3z" fill="#2f68b4"/></svg>
<div class="a t" style="left:88px;top:671.84px;line-height:20px;font-family:'Liberation Sans',sans-serif;font-size:12px;letter-spacing:-0.172px;">Advanced</div>
<svg class="a" style="left:49px;top:696px;" width="7" height="10" viewBox="0 0 7 10"><path d="M1.100 1.200l3.800 3.800L1.100 8.800" fill="none" stroke="#9c9c9c" stroke-width="1.900"/></svg>
<svg class="a" style="left:66px;top:695px;" width="16" height="12" viewBox="0 0 16 12"><path d="M0 0.300h6.200l1 1.900h5.700v9.600H0z" fill="#4a60a8"/><path d="M13.500 3.600h2.500l-2 8.200h-1.400l0.300-3z" fill="#4a60a8"/></svg>
<div class="a t" style="left:88px;top:691.84px;line-height:20px;font-family:'Liberation Sans',sans-serif;font-size:12px;letter-spacing:-0.004px;">Default</div>
<svg class="a" style="left:49px;top:716px;" width="7" height="10" viewBox="0 0 7 10"><path d="M1.100 1.200l3.800 3.800L1.100 8.800" fill="none" stroke="#9c9c9c" stroke-width="1.900"/></svg>
<svg class="a" style="left:66px;top:715px;" width="16" height="12" viewBox="0 0 16 12"><path d="M0 0.300h6.200l1 1.900h5.700v9.600H0z" fill="#4a60a8"/><path d="M13.500 3.600h2.500l-2 8.200h-1.400l0.300-3z" fill="#4a60a8"/></svg>
<div class="a t" style="left:88px;top:711.84px;line-height:20px;font-family:'Liberation Sans',sans-serif;font-size:12px;letter-spacing:-0.875px;">LAYOUTS</div>
<svg class="a" style="left:49px;top:736px;" width="7" height="10" viewBox="0 0 7 10"><path d="M1.100 1.200l3.800 3.800L1.100 8.800" fill="none" stroke="#9c9c9c" stroke-width="1.900"/></svg>
<svg class="a" style="left:66px;top:735px;" width="16" height="12" viewBox="0 0 16 12"><path d="M0 0.300h6.200l1 1.900h5.700v9.600H0z" fill="#4a60a8"/><path d="M13.500 3.600h2.500l-2 8.200h-1.400l0.300-3z" fill="#4a60a8"/></svg>
<div class="a t" style="left:88px;top:731.84px;line-height:20px;font-family:'Liberation Sans',sans-serif;font-size:12px;letter-spacing:-0.213px;">Standard</div>
<svg class="a" style="left:49px;top:756px;" width="7" height="10" viewBox="0 0 7 10"><path d="M1.100 1.200l3.800 3.800L1.100 8.800" fill="none" stroke="#9c9c9c" stroke-width="1.900"/></svg>
<svg class="a" style="left:66px;top:755px;" width="16" height="12" viewBox="0 0 16 12"><path d="M0 0.300h6.200l1 1.900h5.700v9.600H0z" fill="#4a60a8"/><path d="M13.500 3.600h2.500l-2 8.200h-1.400l0.300-3z" fill="#4a60a8"/></svg>
<div class="a t" style="left:88px;top:751.84px;line-height:20px;font-family:'Liberation Sans',sans-serif;font-size:12px;letter-spacing:-0.227px;">Steelblue</div>
<svg class="a" style="left:49px;top:776px;" width="7" height="10" viewBox="0 0 7 10"><path d="M1.100 1.200l3.800 3.800L1.100 8.800" fill="none" stroke="#9c9c9c" stroke-width="1.900"/></svg>
<svg class="a" style="left:66px;top:775px;" width="16" height="12" viewBox="0 0 16 12"><path d="M0 0.300h6.200l1 1.900h5.700v9.600H0z" fill="#4a60a8"/><path d="M13.500 3.600h2.500l-2 8.200h-1.400l0.300-3z" fill="#4a60a8"/></svg>
<div class="a t" style="left:88px;top:771.84px;line-height:20px;font-family:'Liberation Sans',sans-serif;font-size:12px;letter-spacing:-0.145px;">Symbols</div>
<svg class="a" style="left:28px;top:798px;" width="10" height="7" viewBox="0 0 10 7"><path d="M0.800 1.100l3.900 3.900L8.600 1.100" fill="none" stroke="#333" stroke-width="1.900"/></svg>
<svg class="a" style="left:46px;top:795px;" width="16" height="12" viewBox="0 0 16 12"><path d="M0 0.300h6.200l1 1.900h5.700v9.600H0z" fill="#4a60a8"/><path d="M13.500 3.600h2.500l-2 8.200h-1.400l0.300-3z" fill="#4a60a8"/></svg>
<div class="a t" style="left:68px;top:791.84px;line-height:20px;font-family:'Liberation Sans',sans-serif;font-size:12px;letter-spacing:-1.288px;">PROJECT</div>
<svg class="a" style="left:49px;top:816px;" width="7" height="10" viewBox="0 0 7 10"><path d="M1.100 1.200l3.800 3.800L1.100 8.800" fill="none" stroke="#9c9c9c" stroke-width="1.900"/></svg>
<svg class="a" style="left:66px;top:815px;" width="16" height="12" viewBox="0 0 16 12"><path d="M0 0.300h6.200l1 1.900h5.700v9.600H0z" fill="#4a60a8"/><path d="M13.500 3.600h2.500l-2 8.200h-1.400l0.300-3z" fill="#4a60a8"/></svg>
<div class="a t" style="left:88px;top:811.84px;line-height:20px;font-family:'Liberation Sans',sans-serif;font-size:12px;letter-spacing:-0.875px;">LAYOUTS</div>
<div class="a" style="left:206px;top:649.5px;width:1082px;height:197.5px;background:#fff;border:1px solid #dcdcdc;border-right:none;border-bottom:none"></div>
<div class="a" style="left:206px;top:671px;width:1082px;height:1px;background:#dcdcdc"></div>
<svg class="a" style="left:208px;top:653px;" width="16" height="15" viewBox="0 0 16 15"><circle cx="5.800" cy="5.800" r="4.800" fill="none" stroke="#555" stroke-width="1.500"/><path d="M9.400 9.400l5 4.800" stroke="#555" stroke-width="2.200" stroke-linecap="round"/></svg>
<div class="a" style="left:1275px;top:672px;width:13px;height:175px;background:#f0f0f0"></div>
<div class="a" style="left:1275px;top:690px;width:13px;height:41px;background:#c9c9c9"></div>
<svg class="a" style="left:1277px;top:679px;" width="9" height="6" viewBox="0 0 9 6"><path d="M0.800 5l3.700-3.800L8.200 5" fill="none" stroke="#333" stroke-width="1.900"/></svg>
<svg class="a" style="left:1277px;top:836px;" width="9" height="6" viewBox="0 0 9 6"><path d="M0.800 1l3.700 3.800L8.200 1" fill="none" stroke="#333" stroke-width="1.900"/></svg>
<div class="a" style="left:208px;top:823px;width:242px;height:24px;background:#e5f1fb"></div>
<div class="a" style="left:206px;top:672px;width:1069px;height:175px;overflow:hidden">
<div class="a t" style="left:59px;top:3.51px;line-height:20px;font-family:'DejaVu Sans Condensed','Liberation Sans',sans-serif;font-size:10.67px;font-weight:bold;letter-spacing:0.157px;">Bar Horizontal</div>
<div class="a t" style="left:58.4px;top:15.90px;line-height:20px;font-family:'Liberation Sans',sans-serif;font-size:10.67px;color:#6a6a6a;">Displays value of an address as bar</div>
<div class="a t" style="left:58.4px;top:28.70px;line-height:20px;font-family:'Liberation Sans',sans-serif;font-size:10.67px;color:#6a6a6a;">chart.</div>
<div class="a t" style="left:303px;top:3.51px;line-height:20px;font-family:'DejaVu Sans Condensed','Liberation Sans',sans-serif;font-size:10.67px;font-weight:bold;letter-spacing:0.115px;">Bar Vertical</div>
<div class="a t" style="left:302.4px;top:15.90px;line-height:20px;font-family:'Liberation Sans',sans-serif;font-size:10.67px;color:#6a6a6a;">Displays value of an address as bar</div>
<div class="a t" style="left:302.4px;top:28.70px;line-height:20px;font-family:'Liberation Sans',sans-serif;font-size:10.67px;color:#6a6a6a;">chart.</div>
<div class="a t" style="left:547px;top:3.51px;line-height:20px;font-family:'DejaVu Sans Condensed','Liberation Sans',sans-serif;font-size:10.67px;font-weight:bold;letter-spacing:0.047px;">Button</div>
<div class="a t" style="left:546.4px;top:15.90px;line-height:20px;font-family:'Liberation Sans',sans-serif;font-size:10.67px;color:#6a6a6a;">Fires trigger &quot;clicked&quot;.</div>
<div class="a t" style="left:791px;top:3.51px;line-height:20px;font-family:'DejaVu Sans Condensed','Liberation Sans',sans-serif;font-size:10.67px;font-weight:bold;letter-spacing:0.230px;">Button Alarmlist</div>
<div class="a t" style="left:790.4px;top:15.90px;line-height:20px;font-family:'Liberation Sans',sans-serif;font-size:10.67px;color:#6a6a6a;">Button for alarm list actions.</div>
<div class="a t" style="left:59px;top:78.51px;line-height:20px;font-family:'DejaVu Sans Condensed','Liberation Sans',sans-serif;font-size:10.67px;font-weight:bold;letter-spacing:0.257px;">Button Image Display</div>
<div class="a t" style="left:58.4px;top:90.90px;line-height:20px;font-family:'Liberation Sans',sans-serif;font-size:10.67px;color:#6a6a6a;">Displays images and sets addresses.</div>
<div class="a t" style="left:303px;top:78.51px;line-height:20px;font-family:'DejaVu Sans Condensed','Liberation Sans',sans-serif;font-size:10.67px;font-weight:bold;letter-spacing:0.478px;">Button Increment/Decrement</div>
<div class="a t" style="left:302.4px;top:90.90px;line-height:20px;font-family:'Liberation Sans',sans-serif;font-size:10.67px;color:#6a6a6a;">Increments/decrements value of an</div>
<div class="a t" style="left:302.4px;top:103.70px;line-height:20px;font-family:'Liberation Sans',sans-serif;font-size:10.67px;color:#6a6a6a;">address.</div>
<div class="a t" style="left:547px;top:78.51px;line-height:20px;font-family:'DejaVu Sans Condensed','Liberation Sans',sans-serif;font-size:10.67px;font-weight:bold;letter-spacing:0.146px;">Button Open Display</div>
<div class="a t" style="left:546.4px;top:90.90px;line-height:20px;font-family:'Liberation Sans',sans-serif;font-size:10.67px;color:#6a6a6a;">Opens the specified display.</div>
<div class="a t" style="left:791px;top:78.51px;line-height:20px;font-family:'DejaVu Sans Condensed','Liberation Sans',sans-serif;font-size:10.67px;font-weight:bold;letter-spacing:0.184px;">Button Set Address</div>
<div class="a t" style="left:790.4px;top:90.90px;line-height:20px;font-family:'Liberation Sans',sans-serif;font-size:10.67px;color:#6a6a6a;">Sets the specified value to an</div>
<div class="a t" style="left:790.4px;top:103.70px;line-height:20px;font-family:'Liberation Sans',sans-serif;font-size:10.67px;color:#6a6a6a;">address.</div>
<div class="a t" style="left:59px;top:153.51px;line-height:20px;font-family:'DejaVu Sans Condensed','Liberation Sans',sans-serif;font-size:10.67px;font-weight:bold;letter-spacing:0.139px;">Button Switch</div>
<div class="a t" style="left:58.4px;top:165.90px;line-height:20px;font-family:'Liberation Sans',sans-serif;font-size:10.67px;color:#6a6a6a;">Switches 2 values on an address.</div>
<div class="a t" style="left:303px;top:153.51px;line-height:20px;font-family:'DejaVu Sans Condensed','Liberation Sans',sans-serif;font-size:10.67px;font-weight:bold;letter-spacing:0.367px;">Checkbox</div>
<div class="a t" style="left:302.4px;top:165.90px;line-height:20px;font-family:'Liberation Sans',sans-serif;font-size:10.67px;color:#6a6a6a;">Allows the selection/deselection of a</div>
<div class="a t" style="left:547px;top:153.51px;line-height:20px;font-family:'DejaVu Sans Condensed','Liberation Sans',sans-serif;font-size:10.67px;font-weight:bold;letter-spacing:0.186px;">Clickarea</div>
<div class="a t" style="left:546.4px;top:165.90px;line-height:20px;font-family:'Liberation Sans',sans-serif;font-size:10.67px;color:#6a6a6a;">Sets the specified value to an</div>
<div class="a t" style="left:791px;top:153.51px;line-height:20px;font-family:'DejaVu Sans Condensed','Liberation Sans',sans-serif;font-size:10.67px;font-weight:bold;letter-spacing:0.412px;">Combobox</div>
<div class="a t" style="left:790.4px;top:165.90px;line-height:20px;font-family:'Liberation Sans',sans-serif;font-size:10.67px;color:#6a6a6a;">Selects items from a dropdown</div>
</div>
<svg class="a" style="left:217px;top:700px;" width="40" height="11" viewBox="0 0 40 11"><rect x="10" y="4" width="27" height="6" fill="#f0d700"/><path d="M0 1.500h8" stroke="#ddd" stroke-width="0.600"/><path d="M9.600 2.400v1.600" stroke="#e33" stroke-width="0.800"/><path d="M11 8.500h25" stroke="#f8ec90" stroke-width="1" stroke-dasharray="0.800 1.700"/></svg>
<svg class="a" style="left:470px;top:682px;" width="14" height="48" viewBox="0 0 14 48"><rect x="3.600" y="5.600" width="7.400" height="33.600" rx="0.800" fill="#efefef"/><rect x="4.400" y="6.600" width="5.600" height="31.400" fill="#f0d700"/><path d="M2.500 38h2" stroke="#e33" stroke-width="0.800"/><path d="M3.500 41.500h7M6 43.500h2" stroke="#bbb" stroke-width="0.600" stroke-dasharray="1 1"/></svg>
<div class="a" style="left:699px;top:700px;width:46.6px;height:18px;background:#e9e9e9;border:1px solid #d4d4d4;border-radius:1px"></div>
<div class="a t" style="left:699px;top:700px;width:46.600px;line-height:18px;text-align:center;font-size:6.800px;color:#444">T{Basic}</div>
<div class="a" style="left:943px;top:700px;width:46.6px;height:18px;background:#e9e9e9;border:1px solid #d4d4d4;border-radius:1px"></div>
<div class="a t" style="left:943px;top:700px;width:46.600px;line-height:18px;text-align:center;font-size:6.800px;color:#444">T{Action}</div>
<svg class="a" style="left:211px;top:761px;" width="47" height="46" viewBox="0 0 47 46"><rect x="0.500" y="0.500" width="46" height="45" fill="#fff" stroke="#8c8c8c"/><path d="M2 23C2 10 10 5.500 15 6.500c8 1.500 8 14 8.500 17S25 40 33 39.500c8-0.500 11-8 11-16" fill="none" stroke="#333" stroke-width="1.200"/><path d="M3.500 23l9.500-8.500v5h7v7.500h-7v5z" fill="#2fcf1f" stroke="#1a8a10" stroke-width="0.800"/><path d="M43 23l-9.500-8.500v5h-7v7.500h7v5z" fill="#2fcf1f" stroke="#1a8a10" stroke-width="0.800"/><path d="M1.500 23h3M20 23h6M42 23h3" stroke="#e8b800" stroke-width="1"/></svg>
<div class="a" style="left:455px;top:775px;width:46.6px;height:18px;background:#e9e9e9;border:1px solid #d4d4d4;border-radius:1px"></div>
<div class="a t" style="left:455px;top:775px;width:46.600px;line-height:18px;text-align:center;font-size:6.800px;color:#444">+-</div>
<div class="a" style="left:699px;top:775px;width:46.6px;height:18px;background:#e9e9e9;border:1px solid #d4d4d4;border-radius:1px"></div>
<div class="a t" style="left:699px;top:775px;width:46.600px;line-height:18px;text-align:center;font-size:6.800px;color:#444">T{Display}</div>
<div class="a" style="left:943px;top:775px;width:46.6px;height:18px;background:#e9e9e9;border:1px solid #d4d4d4;border-radius:1px"></div>
<div class="a t" style="left:943px;top:775px;width:46.600px;line-height:18px;text-align:center;font-size:6.800px;color:#444">T{Set address}</div>
<div class="a" style="left:6px;top:848.5px;width:1282px;height:1px;background:#a9a9a9"></div>
<div class="a" style="left:6px;top:849.5px;width:83.5px;height:17.5px;background:#f0f0f0;border:1px solid #d4d4d4;border-top:none;border-left:none"></div>
<div class="a" style="left:91px;top:849.5px;width:63.5px;height:17.5px;background:#f0f0f0;border:1px solid #d4d4d4;border-top:none"></div>
<div class="a" style="left:155px;top:848.5px;width:57.5px;height:18.5px;background:#fff;border-right:1px solid #d4d4d4"></div>
<div class="a t" style="left:12px;top:848.62px;line-height:20px;font-family:'Liberation Sans',sans-serif;font-size:11.5px;letter-spacing:-0.606px;">Global Search</div>
<div class="a t" style="left:101px;top:848.62px;line-height:20px;font-family:'Liberation Sans',sans-serif;font-size:11.5px;letter-spacing:-0.667px;">Message</div>
<div class="a t" style="left:167px;top:849.62px;line-height:20px;font-family:'Liberation Sans',sans-serif;font-size:11.5px;letter-spacing:-0.308px;">Library</div>
<div class="a" style="left:1px;top:872px;width:1292px;height:21px;background:#f0f0f0"></div>
<svg class="a" style="left:6px;top:875px;" width="14" height="14" viewBox="0 0 14 14"><g fill="none" stroke="#6cb33f" stroke-width="1.700" transform="rotate(-45 7 7)"><rect x="0.500" y="4.400" width="7.600" height="5.200" rx="2.600"/><rect x="5.900" y="4.400" width="7.600" height="5.200" rx="2.600"/></g></svg>
<div class="a t" style="left:31px;top:873.22px;line-height:20px;font-family:'Liberation Sans',sans-serif;font-size:11.5px;letter-spacing:0.168px;">root</div>
<div class="a t" style="left:294px;top:873.22px;line-height:20px;font-family:'Liberation Sans',sans-serif;font-size:11.5px;letter-spacing:-0.118px;">opc.tcp://localhost:4840</div>
<div class="a t" style="left:557px;top:873.22px;line-height:20px;font-family:'Liberation Sans',sans-serif;font-size:11.5px;letter-spacing:-0.238px;">C:/Program Files/atvise/</div>
<div class="a" style="left:1030px;top:876.5px;width:60px;height:11px;background:#e6e6e6;border:1px solid #bcbcbc"></div>
<svg class="a" style="left:1254px;top:874px;" width="16" height="16" viewBox="0 0 16 16"><path d="M3.600 11.600V7.400c0-2.800 1.800-4.800 4.400-4.800s4.400 2 4.400 4.800v4.200" fill="none" stroke="#111" stroke-width="1.500"/><path d="M1.800 11.900h12.400" stroke="#111" stroke-width="1.500"/><path d="M6.800 14.200h2.400" stroke="#111" stroke-width="1.300"/><path d="M8 1.200v1.400" stroke="#111" stroke-width="1.600"/><path d="M1.200 5.400c0-1.200 0.500-2.400 1.200-3.200M14.800 5.400c0-1.200-0.500-2.400-1.200-3.200" fill="none" stroke="#111" stroke-width="1.100"/></svg>
<svg class="a" style="left:1280px;top:882px;" width="10" height="10" viewBox="0 0 10 10"><g fill="#b5b5b5"><rect x="7" y="1" width="2" height="2"/><rect x="4" y="4" width="2" height="2"/><rect x="7" y="4" width="2" height="2"/><rect x="1" y="7" width="2" height="2"/><rect x="4" y="7" width="2" height="2"/><rect x="7" y="7" width="2" height="2"/></g></svg>
<div class="a" style="left:1293px;top:0px;width:1px;height:894px;background:#f4f4f4"></div>
<div class="a" style="left:0px;top:0px;width:1293px;height:894px;border:1px solid #62666c;border-left-color:#5e5e5e;pointer-events:none"></div>
<svg class="a" style="left:0;top:0;pointer-events:none" width="1294" height="894" viewBox="0 0 1294 894"><rect x="264.3" y="83.7" width="740.0" height="32.59999999999999" fill="none" stroke="#9a1915" stroke-width="4.6"/></svg>
<svg class="a" style="left:0;top:0;pointer-events:none" width="1294" height="894" viewBox="0 0 1294 894"><rect x="295.3" y="146.3" width="33.20000000000001" height="329.0" fill="none" stroke="#9a1915" stroke-width="4.6"/></svg>
<svg class="a" style="left:0;top:0;pointer-events:none" width="1294" height="894" viewBox="0 0 1294 894"><rect x="1038.3" y="123.3" width="244.99999999999991" height="329.2" fill="none" stroke="#9a1915" stroke-width="4.6"/></svg>
<svg class="a" style="left:0;top:0;pointer-events:none" width="1294" height="894" viewBox="0 0 1294 894"><rect x="1038.3" y="452.5" width="244.99999999999991" height="157.99999999999997" fill="none" stroke="#9a1915" stroke-width="4.6"/></svg>
<svg class="a" style="left:0;top:0;pointer-events:none" width="1294" height="894" viewBox="0 0 1294 894"><rect x="3.7" y="631.4000000000001" width="1286.8999999999999" height="237.89999999999995" fill="none" stroke="#9a1915" stroke-width="5.4"/></svg>
<svg class="a" style="left:1007px;top:84px;" width="32" height="32" viewBox="0 0 32 32"><g transform="translate(0.3 0.5)"><circle cx="16" cy="16" r="13.500" fill="#fff" stroke="#8f1a16" stroke-width="3.900"/><text x="20.51" y="24.5" transform="scale(0.78 1)" text-anchor="middle" font-family="Liberation Sans, sans-serif" font-weight="bold" font-size="21.5" fill="#000" stroke="#000" stroke-width="0.500">1</text></g></svg>
<svg class="a" style="left:295px;top:480px;" width="32" height="32" viewBox="0 0 32 32"><g transform="translate(0.3 0.5)"><circle cx="16" cy="16" r="13.500" fill="#fff" stroke="#8f1a16" stroke-width="3.900"/><text x="20.51" y="24.5" transform="scale(0.78 1)" text-anchor="middle" font-family="Liberation Sans, sans-serif" font-weight="bold" font-size="21.5" fill="#000" stroke="#000" stroke-width="0.500">2</text></g></svg>
<svg class="a" style="left:672px;top:160px;" width="32" height="32" viewBox="0 0 32 32"><g transform="translate(0.4 0.5)"><circle cx="16" cy="16" r="13.500" fill="#fff" stroke="#8f1a16" stroke-width="3.900"/><text x="20.51" y="24.5" transform="scale(0.78 1)" text-anchor="middle" font-family="Liberation Sans, sans-serif" font-weight="bold" font-size="21.5" fill="#000" stroke="#000" stroke-width="0.500">3</text></g></svg>
<svg class="a" style="left:838px;top:582px;" width="32" height="32" viewBox="0 0 32 32"><g transform="translate(0.5 0.5)"><circle cx="16" cy="16" r="13.500" fill="#fff" stroke="#8f1a16" stroke-width="3.900"/><text x="20.51" y="24.5" transform="scale(0.78 1)" text-anchor="middle" font-family="Liberation Sans, sans-serif" font-weight="bold" font-size="21.5" fill="#000" stroke="#000" stroke-width="0.500">4</text></g></svg>
<svg class="a" style="left:1232px;top:130px;" width="32" height="32" viewBox="0 0 32 32"><g transform="translate(0.4 0.5)"><circle cx="16" cy="16" r="13.500" fill="#fff" stroke="#8f1a16" stroke-width="3.900"/><text x="16.00" y="24.2" transform="scale(1 1)" text-anchor="middle" font-family="DejaVu Sans, Liberation Sans, sans-serif" font-weight="bold" font-size="22" fill="#000">5</text></g></svg>
<svg class="a" style="left:1149px;top:528px;" width="32" height="32" viewBox="0 0 32 32"><g transform="translate(0.6 0.5)"><circle cx="16" cy="16" r="13.500" fill="#fff" stroke="#8f1a16" stroke-width="3.900"/><text x="16.00" y="24.2" transform="scale(1 1)" text-anchor="middle" font-family="DejaVu Sans, Liberation Sans, sans-serif" font-weight="bold" font-size="22" fill="#000">6</text></g></svg>
<svg class="a" style="left:1217px;top:682px;" width="32" height="32" viewBox="0 0 32 32"><g transform="translate(0.5 0.5)"><circle cx="16" cy="16" r="13.500" fill="#fff" stroke="#8f1a16" stroke-width="3.900"/><text x="16.00" y="24.2" transform="scale(1 1)" text-anchor="middle" font-family="DejaVu Sans, Liberation Sans, sans-serif" font-weight="bold" font-size="22" fill="#000">7</text></g></svg>
</body></html>
